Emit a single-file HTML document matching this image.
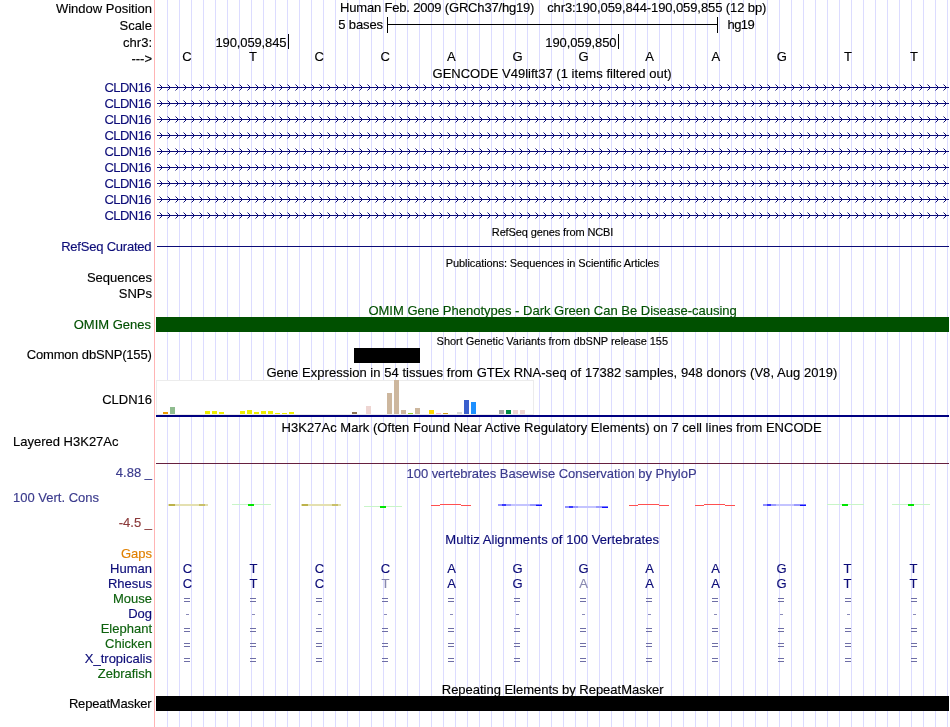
<!DOCTYPE html>
<html><head><meta charset="utf-8"><style>
html,body{margin:0;padding:0;background:#fff;width:950px;height:727px;overflow:hidden}
svg{display:block;font-family:"Liberation Sans", sans-serif;-webkit-font-smoothing:antialiased;will-change:transform}
text{stroke:currentColor;stroke-width:0.15px}
</style></head><body>
<svg width="950" height="727" viewBox="0 0 950 727" shape-rendering="crispEdges">
<rect x="167" y="0" width="1" height="727" fill="#dcdcff"/>
<rect x="179" y="0" width="1" height="727" fill="#dcdcff"/>
<rect x="191" y="0" width="1" height="727" fill="#dcdcff"/>
<rect x="203" y="0" width="1" height="727" fill="#dcdcff"/>
<rect x="215" y="0" width="1" height="727" fill="#dcdcff"/>
<rect x="227" y="0" width="1" height="727" fill="#dcdcff"/>
<rect x="239" y="0" width="1" height="727" fill="#dcdcff"/>
<rect x="251" y="0" width="1" height="727" fill="#dcdcff"/>
<rect x="263" y="0" width="1" height="727" fill="#dcdcff"/>
<rect x="275" y="0" width="1" height="727" fill="#dcdcff"/>
<rect x="287" y="0" width="1" height="727" fill="#dcdcff"/>
<rect x="299" y="0" width="1" height="727" fill="#dcdcff"/>
<rect x="311" y="0" width="1" height="727" fill="#dcdcff"/>
<rect x="323" y="0" width="1" height="727" fill="#dcdcff"/>
<rect x="335" y="0" width="1" height="727" fill="#dcdcff"/>
<rect x="347" y="0" width="1" height="727" fill="#dcdcff"/>
<rect x="359" y="0" width="1" height="727" fill="#dcdcff"/>
<rect x="371" y="0" width="1" height="727" fill="#dcdcff"/>
<rect x="383" y="0" width="1" height="727" fill="#dcdcff"/>
<rect x="395" y="0" width="1" height="727" fill="#dcdcff"/>
<rect x="407" y="0" width="1" height="727" fill="#dcdcff"/>
<rect x="419" y="0" width="1" height="727" fill="#dcdcff"/>
<rect x="431" y="0" width="1" height="727" fill="#dcdcff"/>
<rect x="443" y="0" width="1" height="727" fill="#dcdcff"/>
<rect x="455" y="0" width="1" height="727" fill="#dcdcff"/>
<rect x="467" y="0" width="1" height="727" fill="#dcdcff"/>
<rect x="479" y="0" width="1" height="727" fill="#dcdcff"/>
<rect x="491" y="0" width="1" height="727" fill="#dcdcff"/>
<rect x="503" y="0" width="1" height="727" fill="#dcdcff"/>
<rect x="515" y="0" width="1" height="727" fill="#dcdcff"/>
<rect x="527" y="0" width="1" height="727" fill="#dcdcff"/>
<rect x="539" y="0" width="1" height="727" fill="#dcdcff"/>
<rect x="551" y="0" width="1" height="727" fill="#dcdcff"/>
<rect x="563" y="0" width="1" height="727" fill="#dcdcff"/>
<rect x="575" y="0" width="1" height="727" fill="#dcdcff"/>
<rect x="587" y="0" width="1" height="727" fill="#dcdcff"/>
<rect x="599" y="0" width="1" height="727" fill="#dcdcff"/>
<rect x="611" y="0" width="1" height="727" fill="#dcdcff"/>
<rect x="623" y="0" width="1" height="727" fill="#dcdcff"/>
<rect x="635" y="0" width="1" height="727" fill="#dcdcff"/>
<rect x="647" y="0" width="1" height="727" fill="#dcdcff"/>
<rect x="659" y="0" width="1" height="727" fill="#dcdcff"/>
<rect x="671" y="0" width="1" height="727" fill="#dcdcff"/>
<rect x="683" y="0" width="1" height="727" fill="#dcdcff"/>
<rect x="695" y="0" width="1" height="727" fill="#dcdcff"/>
<rect x="707" y="0" width="1" height="727" fill="#dcdcff"/>
<rect x="719" y="0" width="1" height="727" fill="#dcdcff"/>
<rect x="731" y="0" width="1" height="727" fill="#dcdcff"/>
<rect x="743" y="0" width="1" height="727" fill="#dcdcff"/>
<rect x="755" y="0" width="1" height="727" fill="#dcdcff"/>
<rect x="767" y="0" width="1" height="727" fill="#dcdcff"/>
<rect x="779" y="0" width="1" height="727" fill="#dcdcff"/>
<rect x="791" y="0" width="1" height="727" fill="#dcdcff"/>
<rect x="803" y="0" width="1" height="727" fill="#dcdcff"/>
<rect x="815" y="0" width="1" height="727" fill="#dcdcff"/>
<rect x="827" y="0" width="1" height="727" fill="#dcdcff"/>
<rect x="839" y="0" width="1" height="727" fill="#dcdcff"/>
<rect x="851" y="0" width="1" height="727" fill="#dcdcff"/>
<rect x="863" y="0" width="1" height="727" fill="#dcdcff"/>
<rect x="875" y="0" width="1" height="727" fill="#dcdcff"/>
<rect x="887" y="0" width="1" height="727" fill="#dcdcff"/>
<rect x="899" y="0" width="1" height="727" fill="#dcdcff"/>
<rect x="911" y="0" width="1" height="727" fill="#dcdcff"/>
<rect x="923" y="0" width="1" height="727" fill="#dcdcff"/>
<rect x="935" y="0" width="1" height="727" fill="#dcdcff"/>
<rect x="947" y="0" width="1" height="727" fill="#dcdcff"/>
<rect x="154" y="0" width="1" height="727" fill="#ffb4b4"/>
<text x="152" y="12.5" font-size="13" fill="#000" color="#000" text-anchor="end">Window Position</text>
<text x="152" y="29.5" font-size="13" fill="#000" color="#000" text-anchor="end">Scale</text>
<text x="152" y="46.5" font-size="13" fill="#000" color="#000" text-anchor="end">chr3:</text>
<text x="152" y="62.5" font-size="13" fill="#000" color="#000" text-anchor="end">---&gt;</text>
<text x="340.0" y="12" font-size="13" fill="#000" color="#000" text-anchor="start" textLength="194.45" lengthAdjust="spacing">Human Feb. 2009 (GRCh37/hg19)</text>
<text x="547.2" y="12" font-size="13" fill="#000" color="#000" text-anchor="start" textLength="219.21" lengthAdjust="spacing">chr3:190,059,844-190,059,855 (12 bp)</text>
<text x="338.2" y="29" font-size="13" fill="#000" color="#000" text-anchor="start" textLength="44.83" lengthAdjust="spacing">5 bases</text>
<rect x="387" y="17" width="1" height="16" fill="#000"/>
<rect x="717" y="17" width="1" height="16" fill="#000"/>
<rect x="387" y="24" width="331" height="1" fill="#000"/>
<text x="727.6" y="29" font-size="13" fill="#000" color="#000" text-anchor="start" textLength="27.05" lengthAdjust="spacing">hg19</text>
<text x="215.5" y="46.5" font-size="13" fill="#000" color="#000" text-anchor="start" textLength="71.05" lengthAdjust="spacing">190,059,845</text>
<rect x="288" y="34" width="1" height="15" fill="#000"/>
<text x="545.3" y="46.5" font-size="13" fill="#000" color="#000" text-anchor="start" textLength="71.25" lengthAdjust="spacing">190,059,850</text>
<rect x="618" y="34" width="1" height="15" fill="#000"/>
<text x="187.0" y="61" font-size="13" fill="#000" color="#000" text-anchor="middle">C</text>
<text x="253.1" y="61" font-size="13" fill="#000" color="#000" text-anchor="middle">T</text>
<text x="319.2" y="61" font-size="13" fill="#000" color="#000" text-anchor="middle">C</text>
<text x="385.29999999999995" y="61" font-size="13" fill="#000" color="#000" text-anchor="middle">C</text>
<text x="451.4" y="61" font-size="13" fill="#000" color="#000" text-anchor="middle">A</text>
<text x="517.5" y="61" font-size="13" fill="#000" color="#000" text-anchor="middle">G</text>
<text x="583.5999999999999" y="61" font-size="13" fill="#000" color="#000" text-anchor="middle">G</text>
<text x="649.6999999999999" y="61" font-size="13" fill="#000" color="#000" text-anchor="middle">A</text>
<text x="715.8" y="61" font-size="13" fill="#000" color="#000" text-anchor="middle">A</text>
<text x="781.9" y="61" font-size="13" fill="#000" color="#000" text-anchor="middle">G</text>
<text x="848.0" y="61" font-size="13" fill="#000" color="#000" text-anchor="middle">T</text>
<text x="914.0999999999999" y="61" font-size="13" fill="#000" color="#000" text-anchor="middle">T</text>
<text x="432.5" y="78" font-size="13" fill="#000" color="#000" text-anchor="start" textLength="239.15" lengthAdjust="spacing">GENCODE V49lift37 (1 items filtered out)</text>
<text x="104.5" y="92" font-size="13" fill="#0c0c78" color="#0c0c78" text-anchor="start" textLength="47.08" lengthAdjust="spacing">CLDN16</text>
<rect x="157" y="87" width="792" height="1" fill="#0c0c78"/>
<path d="M161 86h1v3h-1zM160 85h1v1h-1zM160 89h1v1h-1zM169 86h1v3h-1zM168 85h1v1h-1zM168 89h1v1h-1zM177 86h1v3h-1zM176 85h1v1h-1zM176 89h1v1h-1zM185 86h1v3h-1zM184 85h1v1h-1zM184 89h1v1h-1zM193 86h1v3h-1zM192 85h1v1h-1zM192 89h1v1h-1zM201 86h1v3h-1zM200 85h1v1h-1zM200 89h1v1h-1zM209 86h1v3h-1zM208 85h1v1h-1zM208 89h1v1h-1zM217 86h1v3h-1zM216 85h1v1h-1zM216 89h1v1h-1zM225 86h1v3h-1zM224 85h1v1h-1zM224 89h1v1h-1zM233 86h1v3h-1zM232 85h1v1h-1zM232 89h1v1h-1zM241 86h1v3h-1zM240 85h1v1h-1zM240 89h1v1h-1zM249 86h1v3h-1zM248 85h1v1h-1zM248 89h1v1h-1zM257 86h1v3h-1zM256 85h1v1h-1zM256 89h1v1h-1zM265 86h1v3h-1zM264 85h1v1h-1zM264 89h1v1h-1zM273 86h1v3h-1zM272 85h1v1h-1zM272 89h1v1h-1zM281 86h1v3h-1zM280 85h1v1h-1zM280 89h1v1h-1zM289 86h1v3h-1zM288 85h1v1h-1zM288 89h1v1h-1zM297 86h1v3h-1zM296 85h1v1h-1zM296 89h1v1h-1zM305 86h1v3h-1zM304 85h1v1h-1zM304 89h1v1h-1zM313 86h1v3h-1zM312 85h1v1h-1zM312 89h1v1h-1zM321 86h1v3h-1zM320 85h1v1h-1zM320 89h1v1h-1zM329 86h1v3h-1zM328 85h1v1h-1zM328 89h1v1h-1zM337 86h1v3h-1zM336 85h1v1h-1zM336 89h1v1h-1zM345 86h1v3h-1zM344 85h1v1h-1zM344 89h1v1h-1zM353 86h1v3h-1zM352 85h1v1h-1zM352 89h1v1h-1zM361 86h1v3h-1zM360 85h1v1h-1zM360 89h1v1h-1zM369 86h1v3h-1zM368 85h1v1h-1zM368 89h1v1h-1zM377 86h1v3h-1zM376 85h1v1h-1zM376 89h1v1h-1zM385 86h1v3h-1zM384 85h1v1h-1zM384 89h1v1h-1zM393 86h1v3h-1zM392 85h1v1h-1zM392 89h1v1h-1zM401 86h1v3h-1zM400 85h1v1h-1zM400 89h1v1h-1zM409 86h1v3h-1zM408 85h1v1h-1zM408 89h1v1h-1zM417 86h1v3h-1zM416 85h1v1h-1zM416 89h1v1h-1zM425 86h1v3h-1zM424 85h1v1h-1zM424 89h1v1h-1zM433 86h1v3h-1zM432 85h1v1h-1zM432 89h1v1h-1zM441 86h1v3h-1zM440 85h1v1h-1zM440 89h1v1h-1zM449 86h1v3h-1zM448 85h1v1h-1zM448 89h1v1h-1zM457 86h1v3h-1zM456 85h1v1h-1zM456 89h1v1h-1zM465 86h1v3h-1zM464 85h1v1h-1zM464 89h1v1h-1zM473 86h1v3h-1zM472 85h1v1h-1zM472 89h1v1h-1zM481 86h1v3h-1zM480 85h1v1h-1zM480 89h1v1h-1zM489 86h1v3h-1zM488 85h1v1h-1zM488 89h1v1h-1zM497 86h1v3h-1zM496 85h1v1h-1zM496 89h1v1h-1zM505 86h1v3h-1zM504 85h1v1h-1zM504 89h1v1h-1zM513 86h1v3h-1zM512 85h1v1h-1zM512 89h1v1h-1zM521 86h1v3h-1zM520 85h1v1h-1zM520 89h1v1h-1zM529 86h1v3h-1zM528 85h1v1h-1zM528 89h1v1h-1zM537 86h1v3h-1zM536 85h1v1h-1zM536 89h1v1h-1zM545 86h1v3h-1zM544 85h1v1h-1zM544 89h1v1h-1zM553 86h1v3h-1zM552 85h1v1h-1zM552 89h1v1h-1zM561 86h1v3h-1zM560 85h1v1h-1zM560 89h1v1h-1zM569 86h1v3h-1zM568 85h1v1h-1zM568 89h1v1h-1zM577 86h1v3h-1zM576 85h1v1h-1zM576 89h1v1h-1zM585 86h1v3h-1zM584 85h1v1h-1zM584 89h1v1h-1zM593 86h1v3h-1zM592 85h1v1h-1zM592 89h1v1h-1zM601 86h1v3h-1zM600 85h1v1h-1zM600 89h1v1h-1zM609 86h1v3h-1zM608 85h1v1h-1zM608 89h1v1h-1zM617 86h1v3h-1zM616 85h1v1h-1zM616 89h1v1h-1zM625 86h1v3h-1zM624 85h1v1h-1zM624 89h1v1h-1zM633 86h1v3h-1zM632 85h1v1h-1zM632 89h1v1h-1zM641 86h1v3h-1zM640 85h1v1h-1zM640 89h1v1h-1zM649 86h1v3h-1zM648 85h1v1h-1zM648 89h1v1h-1zM657 86h1v3h-1zM656 85h1v1h-1zM656 89h1v1h-1zM665 86h1v3h-1zM664 85h1v1h-1zM664 89h1v1h-1zM673 86h1v3h-1zM672 85h1v1h-1zM672 89h1v1h-1zM681 86h1v3h-1zM680 85h1v1h-1zM680 89h1v1h-1zM689 86h1v3h-1zM688 85h1v1h-1zM688 89h1v1h-1zM697 86h1v3h-1zM696 85h1v1h-1zM696 89h1v1h-1zM705 86h1v3h-1zM704 85h1v1h-1zM704 89h1v1h-1zM713 86h1v3h-1zM712 85h1v1h-1zM712 89h1v1h-1zM721 86h1v3h-1zM720 85h1v1h-1zM720 89h1v1h-1zM729 86h1v3h-1zM728 85h1v1h-1zM728 89h1v1h-1zM737 86h1v3h-1zM736 85h1v1h-1zM736 89h1v1h-1zM745 86h1v3h-1zM744 85h1v1h-1zM744 89h1v1h-1zM753 86h1v3h-1zM752 85h1v1h-1zM752 89h1v1h-1zM761 86h1v3h-1zM760 85h1v1h-1zM760 89h1v1h-1zM769 86h1v3h-1zM768 85h1v1h-1zM768 89h1v1h-1zM777 86h1v3h-1zM776 85h1v1h-1zM776 89h1v1h-1zM785 86h1v3h-1zM784 85h1v1h-1zM784 89h1v1h-1zM793 86h1v3h-1zM792 85h1v1h-1zM792 89h1v1h-1zM801 86h1v3h-1zM800 85h1v1h-1zM800 89h1v1h-1zM809 86h1v3h-1zM808 85h1v1h-1zM808 89h1v1h-1zM817 86h1v3h-1zM816 85h1v1h-1zM816 89h1v1h-1zM825 86h1v3h-1zM824 85h1v1h-1zM824 89h1v1h-1zM833 86h1v3h-1zM832 85h1v1h-1zM832 89h1v1h-1zM841 86h1v3h-1zM840 85h1v1h-1zM840 89h1v1h-1zM849 86h1v3h-1zM848 85h1v1h-1zM848 89h1v1h-1zM857 86h1v3h-1zM856 85h1v1h-1zM856 89h1v1h-1zM865 86h1v3h-1zM864 85h1v1h-1zM864 89h1v1h-1zM873 86h1v3h-1zM872 85h1v1h-1zM872 89h1v1h-1zM881 86h1v3h-1zM880 85h1v1h-1zM880 89h1v1h-1zM889 86h1v3h-1zM888 85h1v1h-1zM888 89h1v1h-1zM897 86h1v3h-1zM896 85h1v1h-1zM896 89h1v1h-1zM905 86h1v3h-1zM904 85h1v1h-1zM904 89h1v1h-1zM913 86h1v3h-1zM912 85h1v1h-1zM912 89h1v1h-1zM921 86h1v3h-1zM920 85h1v1h-1zM920 89h1v1h-1zM929 86h1v3h-1zM928 85h1v1h-1zM928 89h1v1h-1zM937 86h1v3h-1zM936 85h1v1h-1zM936 89h1v1h-1zM945 86h1v3h-1zM944 85h1v1h-1zM944 89h1v1h-1z" fill="#0c0c78"/>
<path d="M159 84h1v1h-1zM159 90h1v1h-1zM167 84h1v1h-1zM167 90h1v1h-1zM175 84h1v1h-1zM175 90h1v1h-1zM183 84h1v1h-1zM183 90h1v1h-1zM191 84h1v1h-1zM191 90h1v1h-1zM199 84h1v1h-1zM199 90h1v1h-1zM207 84h1v1h-1zM207 90h1v1h-1zM215 84h1v1h-1zM215 90h1v1h-1zM223 84h1v1h-1zM223 90h1v1h-1zM231 84h1v1h-1zM231 90h1v1h-1zM239 84h1v1h-1zM239 90h1v1h-1zM247 84h1v1h-1zM247 90h1v1h-1zM255 84h1v1h-1zM255 90h1v1h-1zM263 84h1v1h-1zM263 90h1v1h-1zM271 84h1v1h-1zM271 90h1v1h-1zM279 84h1v1h-1zM279 90h1v1h-1zM287 84h1v1h-1zM287 90h1v1h-1zM295 84h1v1h-1zM295 90h1v1h-1zM303 84h1v1h-1zM303 90h1v1h-1zM311 84h1v1h-1zM311 90h1v1h-1zM319 84h1v1h-1zM319 90h1v1h-1zM327 84h1v1h-1zM327 90h1v1h-1zM335 84h1v1h-1zM335 90h1v1h-1zM343 84h1v1h-1zM343 90h1v1h-1zM351 84h1v1h-1zM351 90h1v1h-1zM359 84h1v1h-1zM359 90h1v1h-1zM367 84h1v1h-1zM367 90h1v1h-1zM375 84h1v1h-1zM375 90h1v1h-1zM383 84h1v1h-1zM383 90h1v1h-1zM391 84h1v1h-1zM391 90h1v1h-1zM399 84h1v1h-1zM399 90h1v1h-1zM407 84h1v1h-1zM407 90h1v1h-1zM415 84h1v1h-1zM415 90h1v1h-1zM423 84h1v1h-1zM423 90h1v1h-1zM431 84h1v1h-1zM431 90h1v1h-1zM439 84h1v1h-1zM439 90h1v1h-1zM447 84h1v1h-1zM447 90h1v1h-1zM455 84h1v1h-1zM455 90h1v1h-1zM463 84h1v1h-1zM463 90h1v1h-1zM471 84h1v1h-1zM471 90h1v1h-1zM479 84h1v1h-1zM479 90h1v1h-1zM487 84h1v1h-1zM487 90h1v1h-1zM495 84h1v1h-1zM495 90h1v1h-1zM503 84h1v1h-1zM503 90h1v1h-1zM511 84h1v1h-1zM511 90h1v1h-1zM519 84h1v1h-1zM519 90h1v1h-1zM527 84h1v1h-1zM527 90h1v1h-1zM535 84h1v1h-1zM535 90h1v1h-1zM543 84h1v1h-1zM543 90h1v1h-1zM551 84h1v1h-1zM551 90h1v1h-1zM559 84h1v1h-1zM559 90h1v1h-1zM567 84h1v1h-1zM567 90h1v1h-1zM575 84h1v1h-1zM575 90h1v1h-1zM583 84h1v1h-1zM583 90h1v1h-1zM591 84h1v1h-1zM591 90h1v1h-1zM599 84h1v1h-1zM599 90h1v1h-1zM607 84h1v1h-1zM607 90h1v1h-1zM615 84h1v1h-1zM615 90h1v1h-1zM623 84h1v1h-1zM623 90h1v1h-1zM631 84h1v1h-1zM631 90h1v1h-1zM639 84h1v1h-1zM639 90h1v1h-1zM647 84h1v1h-1zM647 90h1v1h-1zM655 84h1v1h-1zM655 90h1v1h-1zM663 84h1v1h-1zM663 90h1v1h-1zM671 84h1v1h-1zM671 90h1v1h-1zM679 84h1v1h-1zM679 90h1v1h-1zM687 84h1v1h-1zM687 90h1v1h-1zM695 84h1v1h-1zM695 90h1v1h-1zM703 84h1v1h-1zM703 90h1v1h-1zM711 84h1v1h-1zM711 90h1v1h-1zM719 84h1v1h-1zM719 90h1v1h-1zM727 84h1v1h-1zM727 90h1v1h-1zM735 84h1v1h-1zM735 90h1v1h-1zM743 84h1v1h-1zM743 90h1v1h-1zM751 84h1v1h-1zM751 90h1v1h-1zM759 84h1v1h-1zM759 90h1v1h-1zM767 84h1v1h-1zM767 90h1v1h-1zM775 84h1v1h-1zM775 90h1v1h-1zM783 84h1v1h-1zM783 90h1v1h-1zM791 84h1v1h-1zM791 90h1v1h-1zM799 84h1v1h-1zM799 90h1v1h-1zM807 84h1v1h-1zM807 90h1v1h-1zM815 84h1v1h-1zM815 90h1v1h-1zM823 84h1v1h-1zM823 90h1v1h-1zM831 84h1v1h-1zM831 90h1v1h-1zM839 84h1v1h-1zM839 90h1v1h-1zM847 84h1v1h-1zM847 90h1v1h-1zM855 84h1v1h-1zM855 90h1v1h-1zM863 84h1v1h-1zM863 90h1v1h-1zM871 84h1v1h-1zM871 90h1v1h-1zM879 84h1v1h-1zM879 90h1v1h-1zM887 84h1v1h-1zM887 90h1v1h-1zM895 84h1v1h-1zM895 90h1v1h-1zM903 84h1v1h-1zM903 90h1v1h-1zM911 84h1v1h-1zM911 90h1v1h-1zM919 84h1v1h-1zM919 90h1v1h-1zM927 84h1v1h-1zM927 90h1v1h-1zM935 84h1v1h-1zM935 90h1v1h-1zM943 84h1v1h-1zM943 90h1v1h-1z" fill="#0c0c78" fill-opacity="0.5"/>
<text x="104.5" y="108" font-size="13" fill="#0c0c78" color="#0c0c78" text-anchor="start" textLength="47.08" lengthAdjust="spacing">CLDN16</text>
<rect x="157" y="103" width="792" height="1" fill="#0c0c78"/>
<path d="M161 102h1v3h-1zM160 101h1v1h-1zM160 105h1v1h-1zM169 102h1v3h-1zM168 101h1v1h-1zM168 105h1v1h-1zM177 102h1v3h-1zM176 101h1v1h-1zM176 105h1v1h-1zM185 102h1v3h-1zM184 101h1v1h-1zM184 105h1v1h-1zM193 102h1v3h-1zM192 101h1v1h-1zM192 105h1v1h-1zM201 102h1v3h-1zM200 101h1v1h-1zM200 105h1v1h-1zM209 102h1v3h-1zM208 101h1v1h-1zM208 105h1v1h-1zM217 102h1v3h-1zM216 101h1v1h-1zM216 105h1v1h-1zM225 102h1v3h-1zM224 101h1v1h-1zM224 105h1v1h-1zM233 102h1v3h-1zM232 101h1v1h-1zM232 105h1v1h-1zM241 102h1v3h-1zM240 101h1v1h-1zM240 105h1v1h-1zM249 102h1v3h-1zM248 101h1v1h-1zM248 105h1v1h-1zM257 102h1v3h-1zM256 101h1v1h-1zM256 105h1v1h-1zM265 102h1v3h-1zM264 101h1v1h-1zM264 105h1v1h-1zM273 102h1v3h-1zM272 101h1v1h-1zM272 105h1v1h-1zM281 102h1v3h-1zM280 101h1v1h-1zM280 105h1v1h-1zM289 102h1v3h-1zM288 101h1v1h-1zM288 105h1v1h-1zM297 102h1v3h-1zM296 101h1v1h-1zM296 105h1v1h-1zM305 102h1v3h-1zM304 101h1v1h-1zM304 105h1v1h-1zM313 102h1v3h-1zM312 101h1v1h-1zM312 105h1v1h-1zM321 102h1v3h-1zM320 101h1v1h-1zM320 105h1v1h-1zM329 102h1v3h-1zM328 101h1v1h-1zM328 105h1v1h-1zM337 102h1v3h-1zM336 101h1v1h-1zM336 105h1v1h-1zM345 102h1v3h-1zM344 101h1v1h-1zM344 105h1v1h-1zM353 102h1v3h-1zM352 101h1v1h-1zM352 105h1v1h-1zM361 102h1v3h-1zM360 101h1v1h-1zM360 105h1v1h-1zM369 102h1v3h-1zM368 101h1v1h-1zM368 105h1v1h-1zM377 102h1v3h-1zM376 101h1v1h-1zM376 105h1v1h-1zM385 102h1v3h-1zM384 101h1v1h-1zM384 105h1v1h-1zM393 102h1v3h-1zM392 101h1v1h-1zM392 105h1v1h-1zM401 102h1v3h-1zM400 101h1v1h-1zM400 105h1v1h-1zM409 102h1v3h-1zM408 101h1v1h-1zM408 105h1v1h-1zM417 102h1v3h-1zM416 101h1v1h-1zM416 105h1v1h-1zM425 102h1v3h-1zM424 101h1v1h-1zM424 105h1v1h-1zM433 102h1v3h-1zM432 101h1v1h-1zM432 105h1v1h-1zM441 102h1v3h-1zM440 101h1v1h-1zM440 105h1v1h-1zM449 102h1v3h-1zM448 101h1v1h-1zM448 105h1v1h-1zM457 102h1v3h-1zM456 101h1v1h-1zM456 105h1v1h-1zM465 102h1v3h-1zM464 101h1v1h-1zM464 105h1v1h-1zM473 102h1v3h-1zM472 101h1v1h-1zM472 105h1v1h-1zM481 102h1v3h-1zM480 101h1v1h-1zM480 105h1v1h-1zM489 102h1v3h-1zM488 101h1v1h-1zM488 105h1v1h-1zM497 102h1v3h-1zM496 101h1v1h-1zM496 105h1v1h-1zM505 102h1v3h-1zM504 101h1v1h-1zM504 105h1v1h-1zM513 102h1v3h-1zM512 101h1v1h-1zM512 105h1v1h-1zM521 102h1v3h-1zM520 101h1v1h-1zM520 105h1v1h-1zM529 102h1v3h-1zM528 101h1v1h-1zM528 105h1v1h-1zM537 102h1v3h-1zM536 101h1v1h-1zM536 105h1v1h-1zM545 102h1v3h-1zM544 101h1v1h-1zM544 105h1v1h-1zM553 102h1v3h-1zM552 101h1v1h-1zM552 105h1v1h-1zM561 102h1v3h-1zM560 101h1v1h-1zM560 105h1v1h-1zM569 102h1v3h-1zM568 101h1v1h-1zM568 105h1v1h-1zM577 102h1v3h-1zM576 101h1v1h-1zM576 105h1v1h-1zM585 102h1v3h-1zM584 101h1v1h-1zM584 105h1v1h-1zM593 102h1v3h-1zM592 101h1v1h-1zM592 105h1v1h-1zM601 102h1v3h-1zM600 101h1v1h-1zM600 105h1v1h-1zM609 102h1v3h-1zM608 101h1v1h-1zM608 105h1v1h-1zM617 102h1v3h-1zM616 101h1v1h-1zM616 105h1v1h-1zM625 102h1v3h-1zM624 101h1v1h-1zM624 105h1v1h-1zM633 102h1v3h-1zM632 101h1v1h-1zM632 105h1v1h-1zM641 102h1v3h-1zM640 101h1v1h-1zM640 105h1v1h-1zM649 102h1v3h-1zM648 101h1v1h-1zM648 105h1v1h-1zM657 102h1v3h-1zM656 101h1v1h-1zM656 105h1v1h-1zM665 102h1v3h-1zM664 101h1v1h-1zM664 105h1v1h-1zM673 102h1v3h-1zM672 101h1v1h-1zM672 105h1v1h-1zM681 102h1v3h-1zM680 101h1v1h-1zM680 105h1v1h-1zM689 102h1v3h-1zM688 101h1v1h-1zM688 105h1v1h-1zM697 102h1v3h-1zM696 101h1v1h-1zM696 105h1v1h-1zM705 102h1v3h-1zM704 101h1v1h-1zM704 105h1v1h-1zM713 102h1v3h-1zM712 101h1v1h-1zM712 105h1v1h-1zM721 102h1v3h-1zM720 101h1v1h-1zM720 105h1v1h-1zM729 102h1v3h-1zM728 101h1v1h-1zM728 105h1v1h-1zM737 102h1v3h-1zM736 101h1v1h-1zM736 105h1v1h-1zM745 102h1v3h-1zM744 101h1v1h-1zM744 105h1v1h-1zM753 102h1v3h-1zM752 101h1v1h-1zM752 105h1v1h-1zM761 102h1v3h-1zM760 101h1v1h-1zM760 105h1v1h-1zM769 102h1v3h-1zM768 101h1v1h-1zM768 105h1v1h-1zM777 102h1v3h-1zM776 101h1v1h-1zM776 105h1v1h-1zM785 102h1v3h-1zM784 101h1v1h-1zM784 105h1v1h-1zM793 102h1v3h-1zM792 101h1v1h-1zM792 105h1v1h-1zM801 102h1v3h-1zM800 101h1v1h-1zM800 105h1v1h-1zM809 102h1v3h-1zM808 101h1v1h-1zM808 105h1v1h-1zM817 102h1v3h-1zM816 101h1v1h-1zM816 105h1v1h-1zM825 102h1v3h-1zM824 101h1v1h-1zM824 105h1v1h-1zM833 102h1v3h-1zM832 101h1v1h-1zM832 105h1v1h-1zM841 102h1v3h-1zM840 101h1v1h-1zM840 105h1v1h-1zM849 102h1v3h-1zM848 101h1v1h-1zM848 105h1v1h-1zM857 102h1v3h-1zM856 101h1v1h-1zM856 105h1v1h-1zM865 102h1v3h-1zM864 101h1v1h-1zM864 105h1v1h-1zM873 102h1v3h-1zM872 101h1v1h-1zM872 105h1v1h-1zM881 102h1v3h-1zM880 101h1v1h-1zM880 105h1v1h-1zM889 102h1v3h-1zM888 101h1v1h-1zM888 105h1v1h-1zM897 102h1v3h-1zM896 101h1v1h-1zM896 105h1v1h-1zM905 102h1v3h-1zM904 101h1v1h-1zM904 105h1v1h-1zM913 102h1v3h-1zM912 101h1v1h-1zM912 105h1v1h-1zM921 102h1v3h-1zM920 101h1v1h-1zM920 105h1v1h-1zM929 102h1v3h-1zM928 101h1v1h-1zM928 105h1v1h-1zM937 102h1v3h-1zM936 101h1v1h-1zM936 105h1v1h-1zM945 102h1v3h-1zM944 101h1v1h-1zM944 105h1v1h-1z" fill="#0c0c78"/>
<path d="M159 100h1v1h-1zM159 106h1v1h-1zM167 100h1v1h-1zM167 106h1v1h-1zM175 100h1v1h-1zM175 106h1v1h-1zM183 100h1v1h-1zM183 106h1v1h-1zM191 100h1v1h-1zM191 106h1v1h-1zM199 100h1v1h-1zM199 106h1v1h-1zM207 100h1v1h-1zM207 106h1v1h-1zM215 100h1v1h-1zM215 106h1v1h-1zM223 100h1v1h-1zM223 106h1v1h-1zM231 100h1v1h-1zM231 106h1v1h-1zM239 100h1v1h-1zM239 106h1v1h-1zM247 100h1v1h-1zM247 106h1v1h-1zM255 100h1v1h-1zM255 106h1v1h-1zM263 100h1v1h-1zM263 106h1v1h-1zM271 100h1v1h-1zM271 106h1v1h-1zM279 100h1v1h-1zM279 106h1v1h-1zM287 100h1v1h-1zM287 106h1v1h-1zM295 100h1v1h-1zM295 106h1v1h-1zM303 100h1v1h-1zM303 106h1v1h-1zM311 100h1v1h-1zM311 106h1v1h-1zM319 100h1v1h-1zM319 106h1v1h-1zM327 100h1v1h-1zM327 106h1v1h-1zM335 100h1v1h-1zM335 106h1v1h-1zM343 100h1v1h-1zM343 106h1v1h-1zM351 100h1v1h-1zM351 106h1v1h-1zM359 100h1v1h-1zM359 106h1v1h-1zM367 100h1v1h-1zM367 106h1v1h-1zM375 100h1v1h-1zM375 106h1v1h-1zM383 100h1v1h-1zM383 106h1v1h-1zM391 100h1v1h-1zM391 106h1v1h-1zM399 100h1v1h-1zM399 106h1v1h-1zM407 100h1v1h-1zM407 106h1v1h-1zM415 100h1v1h-1zM415 106h1v1h-1zM423 100h1v1h-1zM423 106h1v1h-1zM431 100h1v1h-1zM431 106h1v1h-1zM439 100h1v1h-1zM439 106h1v1h-1zM447 100h1v1h-1zM447 106h1v1h-1zM455 100h1v1h-1zM455 106h1v1h-1zM463 100h1v1h-1zM463 106h1v1h-1zM471 100h1v1h-1zM471 106h1v1h-1zM479 100h1v1h-1zM479 106h1v1h-1zM487 100h1v1h-1zM487 106h1v1h-1zM495 100h1v1h-1zM495 106h1v1h-1zM503 100h1v1h-1zM503 106h1v1h-1zM511 100h1v1h-1zM511 106h1v1h-1zM519 100h1v1h-1zM519 106h1v1h-1zM527 100h1v1h-1zM527 106h1v1h-1zM535 100h1v1h-1zM535 106h1v1h-1zM543 100h1v1h-1zM543 106h1v1h-1zM551 100h1v1h-1zM551 106h1v1h-1zM559 100h1v1h-1zM559 106h1v1h-1zM567 100h1v1h-1zM567 106h1v1h-1zM575 100h1v1h-1zM575 106h1v1h-1zM583 100h1v1h-1zM583 106h1v1h-1zM591 100h1v1h-1zM591 106h1v1h-1zM599 100h1v1h-1zM599 106h1v1h-1zM607 100h1v1h-1zM607 106h1v1h-1zM615 100h1v1h-1zM615 106h1v1h-1zM623 100h1v1h-1zM623 106h1v1h-1zM631 100h1v1h-1zM631 106h1v1h-1zM639 100h1v1h-1zM639 106h1v1h-1zM647 100h1v1h-1zM647 106h1v1h-1zM655 100h1v1h-1zM655 106h1v1h-1zM663 100h1v1h-1zM663 106h1v1h-1zM671 100h1v1h-1zM671 106h1v1h-1zM679 100h1v1h-1zM679 106h1v1h-1zM687 100h1v1h-1zM687 106h1v1h-1zM695 100h1v1h-1zM695 106h1v1h-1zM703 100h1v1h-1zM703 106h1v1h-1zM711 100h1v1h-1zM711 106h1v1h-1zM719 100h1v1h-1zM719 106h1v1h-1zM727 100h1v1h-1zM727 106h1v1h-1zM735 100h1v1h-1zM735 106h1v1h-1zM743 100h1v1h-1zM743 106h1v1h-1zM751 100h1v1h-1zM751 106h1v1h-1zM759 100h1v1h-1zM759 106h1v1h-1zM767 100h1v1h-1zM767 106h1v1h-1zM775 100h1v1h-1zM775 106h1v1h-1zM783 100h1v1h-1zM783 106h1v1h-1zM791 100h1v1h-1zM791 106h1v1h-1zM799 100h1v1h-1zM799 106h1v1h-1zM807 100h1v1h-1zM807 106h1v1h-1zM815 100h1v1h-1zM815 106h1v1h-1zM823 100h1v1h-1zM823 106h1v1h-1zM831 100h1v1h-1zM831 106h1v1h-1zM839 100h1v1h-1zM839 106h1v1h-1zM847 100h1v1h-1zM847 106h1v1h-1zM855 100h1v1h-1zM855 106h1v1h-1zM863 100h1v1h-1zM863 106h1v1h-1zM871 100h1v1h-1zM871 106h1v1h-1zM879 100h1v1h-1zM879 106h1v1h-1zM887 100h1v1h-1zM887 106h1v1h-1zM895 100h1v1h-1zM895 106h1v1h-1zM903 100h1v1h-1zM903 106h1v1h-1zM911 100h1v1h-1zM911 106h1v1h-1zM919 100h1v1h-1zM919 106h1v1h-1zM927 100h1v1h-1zM927 106h1v1h-1zM935 100h1v1h-1zM935 106h1v1h-1zM943 100h1v1h-1zM943 106h1v1h-1z" fill="#0c0c78" fill-opacity="0.5"/>
<text x="104.5" y="124" font-size="13" fill="#0c0c78" color="#0c0c78" text-anchor="start" textLength="47.08" lengthAdjust="spacing">CLDN16</text>
<rect x="157" y="119" width="792" height="1" fill="#0c0c78"/>
<path d="M161 118h1v3h-1zM160 117h1v1h-1zM160 121h1v1h-1zM169 118h1v3h-1zM168 117h1v1h-1zM168 121h1v1h-1zM177 118h1v3h-1zM176 117h1v1h-1zM176 121h1v1h-1zM185 118h1v3h-1zM184 117h1v1h-1zM184 121h1v1h-1zM193 118h1v3h-1zM192 117h1v1h-1zM192 121h1v1h-1zM201 118h1v3h-1zM200 117h1v1h-1zM200 121h1v1h-1zM209 118h1v3h-1zM208 117h1v1h-1zM208 121h1v1h-1zM217 118h1v3h-1zM216 117h1v1h-1zM216 121h1v1h-1zM225 118h1v3h-1zM224 117h1v1h-1zM224 121h1v1h-1zM233 118h1v3h-1zM232 117h1v1h-1zM232 121h1v1h-1zM241 118h1v3h-1zM240 117h1v1h-1zM240 121h1v1h-1zM249 118h1v3h-1zM248 117h1v1h-1zM248 121h1v1h-1zM257 118h1v3h-1zM256 117h1v1h-1zM256 121h1v1h-1zM265 118h1v3h-1zM264 117h1v1h-1zM264 121h1v1h-1zM273 118h1v3h-1zM272 117h1v1h-1zM272 121h1v1h-1zM281 118h1v3h-1zM280 117h1v1h-1zM280 121h1v1h-1zM289 118h1v3h-1zM288 117h1v1h-1zM288 121h1v1h-1zM297 118h1v3h-1zM296 117h1v1h-1zM296 121h1v1h-1zM305 118h1v3h-1zM304 117h1v1h-1zM304 121h1v1h-1zM313 118h1v3h-1zM312 117h1v1h-1zM312 121h1v1h-1zM321 118h1v3h-1zM320 117h1v1h-1zM320 121h1v1h-1zM329 118h1v3h-1zM328 117h1v1h-1zM328 121h1v1h-1zM337 118h1v3h-1zM336 117h1v1h-1zM336 121h1v1h-1zM345 118h1v3h-1zM344 117h1v1h-1zM344 121h1v1h-1zM353 118h1v3h-1zM352 117h1v1h-1zM352 121h1v1h-1zM361 118h1v3h-1zM360 117h1v1h-1zM360 121h1v1h-1zM369 118h1v3h-1zM368 117h1v1h-1zM368 121h1v1h-1zM377 118h1v3h-1zM376 117h1v1h-1zM376 121h1v1h-1zM385 118h1v3h-1zM384 117h1v1h-1zM384 121h1v1h-1zM393 118h1v3h-1zM392 117h1v1h-1zM392 121h1v1h-1zM401 118h1v3h-1zM400 117h1v1h-1zM400 121h1v1h-1zM409 118h1v3h-1zM408 117h1v1h-1zM408 121h1v1h-1zM417 118h1v3h-1zM416 117h1v1h-1zM416 121h1v1h-1zM425 118h1v3h-1zM424 117h1v1h-1zM424 121h1v1h-1zM433 118h1v3h-1zM432 117h1v1h-1zM432 121h1v1h-1zM441 118h1v3h-1zM440 117h1v1h-1zM440 121h1v1h-1zM449 118h1v3h-1zM448 117h1v1h-1zM448 121h1v1h-1zM457 118h1v3h-1zM456 117h1v1h-1zM456 121h1v1h-1zM465 118h1v3h-1zM464 117h1v1h-1zM464 121h1v1h-1zM473 118h1v3h-1zM472 117h1v1h-1zM472 121h1v1h-1zM481 118h1v3h-1zM480 117h1v1h-1zM480 121h1v1h-1zM489 118h1v3h-1zM488 117h1v1h-1zM488 121h1v1h-1zM497 118h1v3h-1zM496 117h1v1h-1zM496 121h1v1h-1zM505 118h1v3h-1zM504 117h1v1h-1zM504 121h1v1h-1zM513 118h1v3h-1zM512 117h1v1h-1zM512 121h1v1h-1zM521 118h1v3h-1zM520 117h1v1h-1zM520 121h1v1h-1zM529 118h1v3h-1zM528 117h1v1h-1zM528 121h1v1h-1zM537 118h1v3h-1zM536 117h1v1h-1zM536 121h1v1h-1zM545 118h1v3h-1zM544 117h1v1h-1zM544 121h1v1h-1zM553 118h1v3h-1zM552 117h1v1h-1zM552 121h1v1h-1zM561 118h1v3h-1zM560 117h1v1h-1zM560 121h1v1h-1zM569 118h1v3h-1zM568 117h1v1h-1zM568 121h1v1h-1zM577 118h1v3h-1zM576 117h1v1h-1zM576 121h1v1h-1zM585 118h1v3h-1zM584 117h1v1h-1zM584 121h1v1h-1zM593 118h1v3h-1zM592 117h1v1h-1zM592 121h1v1h-1zM601 118h1v3h-1zM600 117h1v1h-1zM600 121h1v1h-1zM609 118h1v3h-1zM608 117h1v1h-1zM608 121h1v1h-1zM617 118h1v3h-1zM616 117h1v1h-1zM616 121h1v1h-1zM625 118h1v3h-1zM624 117h1v1h-1zM624 121h1v1h-1zM633 118h1v3h-1zM632 117h1v1h-1zM632 121h1v1h-1zM641 118h1v3h-1zM640 117h1v1h-1zM640 121h1v1h-1zM649 118h1v3h-1zM648 117h1v1h-1zM648 121h1v1h-1zM657 118h1v3h-1zM656 117h1v1h-1zM656 121h1v1h-1zM665 118h1v3h-1zM664 117h1v1h-1zM664 121h1v1h-1zM673 118h1v3h-1zM672 117h1v1h-1zM672 121h1v1h-1zM681 118h1v3h-1zM680 117h1v1h-1zM680 121h1v1h-1zM689 118h1v3h-1zM688 117h1v1h-1zM688 121h1v1h-1zM697 118h1v3h-1zM696 117h1v1h-1zM696 121h1v1h-1zM705 118h1v3h-1zM704 117h1v1h-1zM704 121h1v1h-1zM713 118h1v3h-1zM712 117h1v1h-1zM712 121h1v1h-1zM721 118h1v3h-1zM720 117h1v1h-1zM720 121h1v1h-1zM729 118h1v3h-1zM728 117h1v1h-1zM728 121h1v1h-1zM737 118h1v3h-1zM736 117h1v1h-1zM736 121h1v1h-1zM745 118h1v3h-1zM744 117h1v1h-1zM744 121h1v1h-1zM753 118h1v3h-1zM752 117h1v1h-1zM752 121h1v1h-1zM761 118h1v3h-1zM760 117h1v1h-1zM760 121h1v1h-1zM769 118h1v3h-1zM768 117h1v1h-1zM768 121h1v1h-1zM777 118h1v3h-1zM776 117h1v1h-1zM776 121h1v1h-1zM785 118h1v3h-1zM784 117h1v1h-1zM784 121h1v1h-1zM793 118h1v3h-1zM792 117h1v1h-1zM792 121h1v1h-1zM801 118h1v3h-1zM800 117h1v1h-1zM800 121h1v1h-1zM809 118h1v3h-1zM808 117h1v1h-1zM808 121h1v1h-1zM817 118h1v3h-1zM816 117h1v1h-1zM816 121h1v1h-1zM825 118h1v3h-1zM824 117h1v1h-1zM824 121h1v1h-1zM833 118h1v3h-1zM832 117h1v1h-1zM832 121h1v1h-1zM841 118h1v3h-1zM840 117h1v1h-1zM840 121h1v1h-1zM849 118h1v3h-1zM848 117h1v1h-1zM848 121h1v1h-1zM857 118h1v3h-1zM856 117h1v1h-1zM856 121h1v1h-1zM865 118h1v3h-1zM864 117h1v1h-1zM864 121h1v1h-1zM873 118h1v3h-1zM872 117h1v1h-1zM872 121h1v1h-1zM881 118h1v3h-1zM880 117h1v1h-1zM880 121h1v1h-1zM889 118h1v3h-1zM888 117h1v1h-1zM888 121h1v1h-1zM897 118h1v3h-1zM896 117h1v1h-1zM896 121h1v1h-1zM905 118h1v3h-1zM904 117h1v1h-1zM904 121h1v1h-1zM913 118h1v3h-1zM912 117h1v1h-1zM912 121h1v1h-1zM921 118h1v3h-1zM920 117h1v1h-1zM920 121h1v1h-1zM929 118h1v3h-1zM928 117h1v1h-1zM928 121h1v1h-1zM937 118h1v3h-1zM936 117h1v1h-1zM936 121h1v1h-1zM945 118h1v3h-1zM944 117h1v1h-1zM944 121h1v1h-1z" fill="#0c0c78"/>
<path d="M159 116h1v1h-1zM159 122h1v1h-1zM167 116h1v1h-1zM167 122h1v1h-1zM175 116h1v1h-1zM175 122h1v1h-1zM183 116h1v1h-1zM183 122h1v1h-1zM191 116h1v1h-1zM191 122h1v1h-1zM199 116h1v1h-1zM199 122h1v1h-1zM207 116h1v1h-1zM207 122h1v1h-1zM215 116h1v1h-1zM215 122h1v1h-1zM223 116h1v1h-1zM223 122h1v1h-1zM231 116h1v1h-1zM231 122h1v1h-1zM239 116h1v1h-1zM239 122h1v1h-1zM247 116h1v1h-1zM247 122h1v1h-1zM255 116h1v1h-1zM255 122h1v1h-1zM263 116h1v1h-1zM263 122h1v1h-1zM271 116h1v1h-1zM271 122h1v1h-1zM279 116h1v1h-1zM279 122h1v1h-1zM287 116h1v1h-1zM287 122h1v1h-1zM295 116h1v1h-1zM295 122h1v1h-1zM303 116h1v1h-1zM303 122h1v1h-1zM311 116h1v1h-1zM311 122h1v1h-1zM319 116h1v1h-1zM319 122h1v1h-1zM327 116h1v1h-1zM327 122h1v1h-1zM335 116h1v1h-1zM335 122h1v1h-1zM343 116h1v1h-1zM343 122h1v1h-1zM351 116h1v1h-1zM351 122h1v1h-1zM359 116h1v1h-1zM359 122h1v1h-1zM367 116h1v1h-1zM367 122h1v1h-1zM375 116h1v1h-1zM375 122h1v1h-1zM383 116h1v1h-1zM383 122h1v1h-1zM391 116h1v1h-1zM391 122h1v1h-1zM399 116h1v1h-1zM399 122h1v1h-1zM407 116h1v1h-1zM407 122h1v1h-1zM415 116h1v1h-1zM415 122h1v1h-1zM423 116h1v1h-1zM423 122h1v1h-1zM431 116h1v1h-1zM431 122h1v1h-1zM439 116h1v1h-1zM439 122h1v1h-1zM447 116h1v1h-1zM447 122h1v1h-1zM455 116h1v1h-1zM455 122h1v1h-1zM463 116h1v1h-1zM463 122h1v1h-1zM471 116h1v1h-1zM471 122h1v1h-1zM479 116h1v1h-1zM479 122h1v1h-1zM487 116h1v1h-1zM487 122h1v1h-1zM495 116h1v1h-1zM495 122h1v1h-1zM503 116h1v1h-1zM503 122h1v1h-1zM511 116h1v1h-1zM511 122h1v1h-1zM519 116h1v1h-1zM519 122h1v1h-1zM527 116h1v1h-1zM527 122h1v1h-1zM535 116h1v1h-1zM535 122h1v1h-1zM543 116h1v1h-1zM543 122h1v1h-1zM551 116h1v1h-1zM551 122h1v1h-1zM559 116h1v1h-1zM559 122h1v1h-1zM567 116h1v1h-1zM567 122h1v1h-1zM575 116h1v1h-1zM575 122h1v1h-1zM583 116h1v1h-1zM583 122h1v1h-1zM591 116h1v1h-1zM591 122h1v1h-1zM599 116h1v1h-1zM599 122h1v1h-1zM607 116h1v1h-1zM607 122h1v1h-1zM615 116h1v1h-1zM615 122h1v1h-1zM623 116h1v1h-1zM623 122h1v1h-1zM631 116h1v1h-1zM631 122h1v1h-1zM639 116h1v1h-1zM639 122h1v1h-1zM647 116h1v1h-1zM647 122h1v1h-1zM655 116h1v1h-1zM655 122h1v1h-1zM663 116h1v1h-1zM663 122h1v1h-1zM671 116h1v1h-1zM671 122h1v1h-1zM679 116h1v1h-1zM679 122h1v1h-1zM687 116h1v1h-1zM687 122h1v1h-1zM695 116h1v1h-1zM695 122h1v1h-1zM703 116h1v1h-1zM703 122h1v1h-1zM711 116h1v1h-1zM711 122h1v1h-1zM719 116h1v1h-1zM719 122h1v1h-1zM727 116h1v1h-1zM727 122h1v1h-1zM735 116h1v1h-1zM735 122h1v1h-1zM743 116h1v1h-1zM743 122h1v1h-1zM751 116h1v1h-1zM751 122h1v1h-1zM759 116h1v1h-1zM759 122h1v1h-1zM767 116h1v1h-1zM767 122h1v1h-1zM775 116h1v1h-1zM775 122h1v1h-1zM783 116h1v1h-1zM783 122h1v1h-1zM791 116h1v1h-1zM791 122h1v1h-1zM799 116h1v1h-1zM799 122h1v1h-1zM807 116h1v1h-1zM807 122h1v1h-1zM815 116h1v1h-1zM815 122h1v1h-1zM823 116h1v1h-1zM823 122h1v1h-1zM831 116h1v1h-1zM831 122h1v1h-1zM839 116h1v1h-1zM839 122h1v1h-1zM847 116h1v1h-1zM847 122h1v1h-1zM855 116h1v1h-1zM855 122h1v1h-1zM863 116h1v1h-1zM863 122h1v1h-1zM871 116h1v1h-1zM871 122h1v1h-1zM879 116h1v1h-1zM879 122h1v1h-1zM887 116h1v1h-1zM887 122h1v1h-1zM895 116h1v1h-1zM895 122h1v1h-1zM903 116h1v1h-1zM903 122h1v1h-1zM911 116h1v1h-1zM911 122h1v1h-1zM919 116h1v1h-1zM919 122h1v1h-1zM927 116h1v1h-1zM927 122h1v1h-1zM935 116h1v1h-1zM935 122h1v1h-1zM943 116h1v1h-1zM943 122h1v1h-1z" fill="#0c0c78" fill-opacity="0.5"/>
<text x="104.5" y="140" font-size="13" fill="#0c0c78" color="#0c0c78" text-anchor="start" textLength="47.08" lengthAdjust="spacing">CLDN16</text>
<rect x="157" y="135" width="792" height="1" fill="#0c0c78"/>
<path d="M161 134h1v3h-1zM160 133h1v1h-1zM160 137h1v1h-1zM169 134h1v3h-1zM168 133h1v1h-1zM168 137h1v1h-1zM177 134h1v3h-1zM176 133h1v1h-1zM176 137h1v1h-1zM185 134h1v3h-1zM184 133h1v1h-1zM184 137h1v1h-1zM193 134h1v3h-1zM192 133h1v1h-1zM192 137h1v1h-1zM201 134h1v3h-1zM200 133h1v1h-1zM200 137h1v1h-1zM209 134h1v3h-1zM208 133h1v1h-1zM208 137h1v1h-1zM217 134h1v3h-1zM216 133h1v1h-1zM216 137h1v1h-1zM225 134h1v3h-1zM224 133h1v1h-1zM224 137h1v1h-1zM233 134h1v3h-1zM232 133h1v1h-1zM232 137h1v1h-1zM241 134h1v3h-1zM240 133h1v1h-1zM240 137h1v1h-1zM249 134h1v3h-1zM248 133h1v1h-1zM248 137h1v1h-1zM257 134h1v3h-1zM256 133h1v1h-1zM256 137h1v1h-1zM265 134h1v3h-1zM264 133h1v1h-1zM264 137h1v1h-1zM273 134h1v3h-1zM272 133h1v1h-1zM272 137h1v1h-1zM281 134h1v3h-1zM280 133h1v1h-1zM280 137h1v1h-1zM289 134h1v3h-1zM288 133h1v1h-1zM288 137h1v1h-1zM297 134h1v3h-1zM296 133h1v1h-1zM296 137h1v1h-1zM305 134h1v3h-1zM304 133h1v1h-1zM304 137h1v1h-1zM313 134h1v3h-1zM312 133h1v1h-1zM312 137h1v1h-1zM321 134h1v3h-1zM320 133h1v1h-1zM320 137h1v1h-1zM329 134h1v3h-1zM328 133h1v1h-1zM328 137h1v1h-1zM337 134h1v3h-1zM336 133h1v1h-1zM336 137h1v1h-1zM345 134h1v3h-1zM344 133h1v1h-1zM344 137h1v1h-1zM353 134h1v3h-1zM352 133h1v1h-1zM352 137h1v1h-1zM361 134h1v3h-1zM360 133h1v1h-1zM360 137h1v1h-1zM369 134h1v3h-1zM368 133h1v1h-1zM368 137h1v1h-1zM377 134h1v3h-1zM376 133h1v1h-1zM376 137h1v1h-1zM385 134h1v3h-1zM384 133h1v1h-1zM384 137h1v1h-1zM393 134h1v3h-1zM392 133h1v1h-1zM392 137h1v1h-1zM401 134h1v3h-1zM400 133h1v1h-1zM400 137h1v1h-1zM409 134h1v3h-1zM408 133h1v1h-1zM408 137h1v1h-1zM417 134h1v3h-1zM416 133h1v1h-1zM416 137h1v1h-1zM425 134h1v3h-1zM424 133h1v1h-1zM424 137h1v1h-1zM433 134h1v3h-1zM432 133h1v1h-1zM432 137h1v1h-1zM441 134h1v3h-1zM440 133h1v1h-1zM440 137h1v1h-1zM449 134h1v3h-1zM448 133h1v1h-1zM448 137h1v1h-1zM457 134h1v3h-1zM456 133h1v1h-1zM456 137h1v1h-1zM465 134h1v3h-1zM464 133h1v1h-1zM464 137h1v1h-1zM473 134h1v3h-1zM472 133h1v1h-1zM472 137h1v1h-1zM481 134h1v3h-1zM480 133h1v1h-1zM480 137h1v1h-1zM489 134h1v3h-1zM488 133h1v1h-1zM488 137h1v1h-1zM497 134h1v3h-1zM496 133h1v1h-1zM496 137h1v1h-1zM505 134h1v3h-1zM504 133h1v1h-1zM504 137h1v1h-1zM513 134h1v3h-1zM512 133h1v1h-1zM512 137h1v1h-1zM521 134h1v3h-1zM520 133h1v1h-1zM520 137h1v1h-1zM529 134h1v3h-1zM528 133h1v1h-1zM528 137h1v1h-1zM537 134h1v3h-1zM536 133h1v1h-1zM536 137h1v1h-1zM545 134h1v3h-1zM544 133h1v1h-1zM544 137h1v1h-1zM553 134h1v3h-1zM552 133h1v1h-1zM552 137h1v1h-1zM561 134h1v3h-1zM560 133h1v1h-1zM560 137h1v1h-1zM569 134h1v3h-1zM568 133h1v1h-1zM568 137h1v1h-1zM577 134h1v3h-1zM576 133h1v1h-1zM576 137h1v1h-1zM585 134h1v3h-1zM584 133h1v1h-1zM584 137h1v1h-1zM593 134h1v3h-1zM592 133h1v1h-1zM592 137h1v1h-1zM601 134h1v3h-1zM600 133h1v1h-1zM600 137h1v1h-1zM609 134h1v3h-1zM608 133h1v1h-1zM608 137h1v1h-1zM617 134h1v3h-1zM616 133h1v1h-1zM616 137h1v1h-1zM625 134h1v3h-1zM624 133h1v1h-1zM624 137h1v1h-1zM633 134h1v3h-1zM632 133h1v1h-1zM632 137h1v1h-1zM641 134h1v3h-1zM640 133h1v1h-1zM640 137h1v1h-1zM649 134h1v3h-1zM648 133h1v1h-1zM648 137h1v1h-1zM657 134h1v3h-1zM656 133h1v1h-1zM656 137h1v1h-1zM665 134h1v3h-1zM664 133h1v1h-1zM664 137h1v1h-1zM673 134h1v3h-1zM672 133h1v1h-1zM672 137h1v1h-1zM681 134h1v3h-1zM680 133h1v1h-1zM680 137h1v1h-1zM689 134h1v3h-1zM688 133h1v1h-1zM688 137h1v1h-1zM697 134h1v3h-1zM696 133h1v1h-1zM696 137h1v1h-1zM705 134h1v3h-1zM704 133h1v1h-1zM704 137h1v1h-1zM713 134h1v3h-1zM712 133h1v1h-1zM712 137h1v1h-1zM721 134h1v3h-1zM720 133h1v1h-1zM720 137h1v1h-1zM729 134h1v3h-1zM728 133h1v1h-1zM728 137h1v1h-1zM737 134h1v3h-1zM736 133h1v1h-1zM736 137h1v1h-1zM745 134h1v3h-1zM744 133h1v1h-1zM744 137h1v1h-1zM753 134h1v3h-1zM752 133h1v1h-1zM752 137h1v1h-1zM761 134h1v3h-1zM760 133h1v1h-1zM760 137h1v1h-1zM769 134h1v3h-1zM768 133h1v1h-1zM768 137h1v1h-1zM777 134h1v3h-1zM776 133h1v1h-1zM776 137h1v1h-1zM785 134h1v3h-1zM784 133h1v1h-1zM784 137h1v1h-1zM793 134h1v3h-1zM792 133h1v1h-1zM792 137h1v1h-1zM801 134h1v3h-1zM800 133h1v1h-1zM800 137h1v1h-1zM809 134h1v3h-1zM808 133h1v1h-1zM808 137h1v1h-1zM817 134h1v3h-1zM816 133h1v1h-1zM816 137h1v1h-1zM825 134h1v3h-1zM824 133h1v1h-1zM824 137h1v1h-1zM833 134h1v3h-1zM832 133h1v1h-1zM832 137h1v1h-1zM841 134h1v3h-1zM840 133h1v1h-1zM840 137h1v1h-1zM849 134h1v3h-1zM848 133h1v1h-1zM848 137h1v1h-1zM857 134h1v3h-1zM856 133h1v1h-1zM856 137h1v1h-1zM865 134h1v3h-1zM864 133h1v1h-1zM864 137h1v1h-1zM873 134h1v3h-1zM872 133h1v1h-1zM872 137h1v1h-1zM881 134h1v3h-1zM880 133h1v1h-1zM880 137h1v1h-1zM889 134h1v3h-1zM888 133h1v1h-1zM888 137h1v1h-1zM897 134h1v3h-1zM896 133h1v1h-1zM896 137h1v1h-1zM905 134h1v3h-1zM904 133h1v1h-1zM904 137h1v1h-1zM913 134h1v3h-1zM912 133h1v1h-1zM912 137h1v1h-1zM921 134h1v3h-1zM920 133h1v1h-1zM920 137h1v1h-1zM929 134h1v3h-1zM928 133h1v1h-1zM928 137h1v1h-1zM937 134h1v3h-1zM936 133h1v1h-1zM936 137h1v1h-1zM945 134h1v3h-1zM944 133h1v1h-1zM944 137h1v1h-1z" fill="#0c0c78"/>
<path d="M159 132h1v1h-1zM159 138h1v1h-1zM167 132h1v1h-1zM167 138h1v1h-1zM175 132h1v1h-1zM175 138h1v1h-1zM183 132h1v1h-1zM183 138h1v1h-1zM191 132h1v1h-1zM191 138h1v1h-1zM199 132h1v1h-1zM199 138h1v1h-1zM207 132h1v1h-1zM207 138h1v1h-1zM215 132h1v1h-1zM215 138h1v1h-1zM223 132h1v1h-1zM223 138h1v1h-1zM231 132h1v1h-1zM231 138h1v1h-1zM239 132h1v1h-1zM239 138h1v1h-1zM247 132h1v1h-1zM247 138h1v1h-1zM255 132h1v1h-1zM255 138h1v1h-1zM263 132h1v1h-1zM263 138h1v1h-1zM271 132h1v1h-1zM271 138h1v1h-1zM279 132h1v1h-1zM279 138h1v1h-1zM287 132h1v1h-1zM287 138h1v1h-1zM295 132h1v1h-1zM295 138h1v1h-1zM303 132h1v1h-1zM303 138h1v1h-1zM311 132h1v1h-1zM311 138h1v1h-1zM319 132h1v1h-1zM319 138h1v1h-1zM327 132h1v1h-1zM327 138h1v1h-1zM335 132h1v1h-1zM335 138h1v1h-1zM343 132h1v1h-1zM343 138h1v1h-1zM351 132h1v1h-1zM351 138h1v1h-1zM359 132h1v1h-1zM359 138h1v1h-1zM367 132h1v1h-1zM367 138h1v1h-1zM375 132h1v1h-1zM375 138h1v1h-1zM383 132h1v1h-1zM383 138h1v1h-1zM391 132h1v1h-1zM391 138h1v1h-1zM399 132h1v1h-1zM399 138h1v1h-1zM407 132h1v1h-1zM407 138h1v1h-1zM415 132h1v1h-1zM415 138h1v1h-1zM423 132h1v1h-1zM423 138h1v1h-1zM431 132h1v1h-1zM431 138h1v1h-1zM439 132h1v1h-1zM439 138h1v1h-1zM447 132h1v1h-1zM447 138h1v1h-1zM455 132h1v1h-1zM455 138h1v1h-1zM463 132h1v1h-1zM463 138h1v1h-1zM471 132h1v1h-1zM471 138h1v1h-1zM479 132h1v1h-1zM479 138h1v1h-1zM487 132h1v1h-1zM487 138h1v1h-1zM495 132h1v1h-1zM495 138h1v1h-1zM503 132h1v1h-1zM503 138h1v1h-1zM511 132h1v1h-1zM511 138h1v1h-1zM519 132h1v1h-1zM519 138h1v1h-1zM527 132h1v1h-1zM527 138h1v1h-1zM535 132h1v1h-1zM535 138h1v1h-1zM543 132h1v1h-1zM543 138h1v1h-1zM551 132h1v1h-1zM551 138h1v1h-1zM559 132h1v1h-1zM559 138h1v1h-1zM567 132h1v1h-1zM567 138h1v1h-1zM575 132h1v1h-1zM575 138h1v1h-1zM583 132h1v1h-1zM583 138h1v1h-1zM591 132h1v1h-1zM591 138h1v1h-1zM599 132h1v1h-1zM599 138h1v1h-1zM607 132h1v1h-1zM607 138h1v1h-1zM615 132h1v1h-1zM615 138h1v1h-1zM623 132h1v1h-1zM623 138h1v1h-1zM631 132h1v1h-1zM631 138h1v1h-1zM639 132h1v1h-1zM639 138h1v1h-1zM647 132h1v1h-1zM647 138h1v1h-1zM655 132h1v1h-1zM655 138h1v1h-1zM663 132h1v1h-1zM663 138h1v1h-1zM671 132h1v1h-1zM671 138h1v1h-1zM679 132h1v1h-1zM679 138h1v1h-1zM687 132h1v1h-1zM687 138h1v1h-1zM695 132h1v1h-1zM695 138h1v1h-1zM703 132h1v1h-1zM703 138h1v1h-1zM711 132h1v1h-1zM711 138h1v1h-1zM719 132h1v1h-1zM719 138h1v1h-1zM727 132h1v1h-1zM727 138h1v1h-1zM735 132h1v1h-1zM735 138h1v1h-1zM743 132h1v1h-1zM743 138h1v1h-1zM751 132h1v1h-1zM751 138h1v1h-1zM759 132h1v1h-1zM759 138h1v1h-1zM767 132h1v1h-1zM767 138h1v1h-1zM775 132h1v1h-1zM775 138h1v1h-1zM783 132h1v1h-1zM783 138h1v1h-1zM791 132h1v1h-1zM791 138h1v1h-1zM799 132h1v1h-1zM799 138h1v1h-1zM807 132h1v1h-1zM807 138h1v1h-1zM815 132h1v1h-1zM815 138h1v1h-1zM823 132h1v1h-1zM823 138h1v1h-1zM831 132h1v1h-1zM831 138h1v1h-1zM839 132h1v1h-1zM839 138h1v1h-1zM847 132h1v1h-1zM847 138h1v1h-1zM855 132h1v1h-1zM855 138h1v1h-1zM863 132h1v1h-1zM863 138h1v1h-1zM871 132h1v1h-1zM871 138h1v1h-1zM879 132h1v1h-1zM879 138h1v1h-1zM887 132h1v1h-1zM887 138h1v1h-1zM895 132h1v1h-1zM895 138h1v1h-1zM903 132h1v1h-1zM903 138h1v1h-1zM911 132h1v1h-1zM911 138h1v1h-1zM919 132h1v1h-1zM919 138h1v1h-1zM927 132h1v1h-1zM927 138h1v1h-1zM935 132h1v1h-1zM935 138h1v1h-1zM943 132h1v1h-1zM943 138h1v1h-1z" fill="#0c0c78" fill-opacity="0.5"/>
<text x="104.5" y="156" font-size="13" fill="#0c0c78" color="#0c0c78" text-anchor="start" textLength="47.08" lengthAdjust="spacing">CLDN16</text>
<rect x="157" y="151" width="792" height="1" fill="#0c0c78"/>
<path d="M161 150h1v3h-1zM160 149h1v1h-1zM160 153h1v1h-1zM169 150h1v3h-1zM168 149h1v1h-1zM168 153h1v1h-1zM177 150h1v3h-1zM176 149h1v1h-1zM176 153h1v1h-1zM185 150h1v3h-1zM184 149h1v1h-1zM184 153h1v1h-1zM193 150h1v3h-1zM192 149h1v1h-1zM192 153h1v1h-1zM201 150h1v3h-1zM200 149h1v1h-1zM200 153h1v1h-1zM209 150h1v3h-1zM208 149h1v1h-1zM208 153h1v1h-1zM217 150h1v3h-1zM216 149h1v1h-1zM216 153h1v1h-1zM225 150h1v3h-1zM224 149h1v1h-1zM224 153h1v1h-1zM233 150h1v3h-1zM232 149h1v1h-1zM232 153h1v1h-1zM241 150h1v3h-1zM240 149h1v1h-1zM240 153h1v1h-1zM249 150h1v3h-1zM248 149h1v1h-1zM248 153h1v1h-1zM257 150h1v3h-1zM256 149h1v1h-1zM256 153h1v1h-1zM265 150h1v3h-1zM264 149h1v1h-1zM264 153h1v1h-1zM273 150h1v3h-1zM272 149h1v1h-1zM272 153h1v1h-1zM281 150h1v3h-1zM280 149h1v1h-1zM280 153h1v1h-1zM289 150h1v3h-1zM288 149h1v1h-1zM288 153h1v1h-1zM297 150h1v3h-1zM296 149h1v1h-1zM296 153h1v1h-1zM305 150h1v3h-1zM304 149h1v1h-1zM304 153h1v1h-1zM313 150h1v3h-1zM312 149h1v1h-1zM312 153h1v1h-1zM321 150h1v3h-1zM320 149h1v1h-1zM320 153h1v1h-1zM329 150h1v3h-1zM328 149h1v1h-1zM328 153h1v1h-1zM337 150h1v3h-1zM336 149h1v1h-1zM336 153h1v1h-1zM345 150h1v3h-1zM344 149h1v1h-1zM344 153h1v1h-1zM353 150h1v3h-1zM352 149h1v1h-1zM352 153h1v1h-1zM361 150h1v3h-1zM360 149h1v1h-1zM360 153h1v1h-1zM369 150h1v3h-1zM368 149h1v1h-1zM368 153h1v1h-1zM377 150h1v3h-1zM376 149h1v1h-1zM376 153h1v1h-1zM385 150h1v3h-1zM384 149h1v1h-1zM384 153h1v1h-1zM393 150h1v3h-1zM392 149h1v1h-1zM392 153h1v1h-1zM401 150h1v3h-1zM400 149h1v1h-1zM400 153h1v1h-1zM409 150h1v3h-1zM408 149h1v1h-1zM408 153h1v1h-1zM417 150h1v3h-1zM416 149h1v1h-1zM416 153h1v1h-1zM425 150h1v3h-1zM424 149h1v1h-1zM424 153h1v1h-1zM433 150h1v3h-1zM432 149h1v1h-1zM432 153h1v1h-1zM441 150h1v3h-1zM440 149h1v1h-1zM440 153h1v1h-1zM449 150h1v3h-1zM448 149h1v1h-1zM448 153h1v1h-1zM457 150h1v3h-1zM456 149h1v1h-1zM456 153h1v1h-1zM465 150h1v3h-1zM464 149h1v1h-1zM464 153h1v1h-1zM473 150h1v3h-1zM472 149h1v1h-1zM472 153h1v1h-1zM481 150h1v3h-1zM480 149h1v1h-1zM480 153h1v1h-1zM489 150h1v3h-1zM488 149h1v1h-1zM488 153h1v1h-1zM497 150h1v3h-1zM496 149h1v1h-1zM496 153h1v1h-1zM505 150h1v3h-1zM504 149h1v1h-1zM504 153h1v1h-1zM513 150h1v3h-1zM512 149h1v1h-1zM512 153h1v1h-1zM521 150h1v3h-1zM520 149h1v1h-1zM520 153h1v1h-1zM529 150h1v3h-1zM528 149h1v1h-1zM528 153h1v1h-1zM537 150h1v3h-1zM536 149h1v1h-1zM536 153h1v1h-1zM545 150h1v3h-1zM544 149h1v1h-1zM544 153h1v1h-1zM553 150h1v3h-1zM552 149h1v1h-1zM552 153h1v1h-1zM561 150h1v3h-1zM560 149h1v1h-1zM560 153h1v1h-1zM569 150h1v3h-1zM568 149h1v1h-1zM568 153h1v1h-1zM577 150h1v3h-1zM576 149h1v1h-1zM576 153h1v1h-1zM585 150h1v3h-1zM584 149h1v1h-1zM584 153h1v1h-1zM593 150h1v3h-1zM592 149h1v1h-1zM592 153h1v1h-1zM601 150h1v3h-1zM600 149h1v1h-1zM600 153h1v1h-1zM609 150h1v3h-1zM608 149h1v1h-1zM608 153h1v1h-1zM617 150h1v3h-1zM616 149h1v1h-1zM616 153h1v1h-1zM625 150h1v3h-1zM624 149h1v1h-1zM624 153h1v1h-1zM633 150h1v3h-1zM632 149h1v1h-1zM632 153h1v1h-1zM641 150h1v3h-1zM640 149h1v1h-1zM640 153h1v1h-1zM649 150h1v3h-1zM648 149h1v1h-1zM648 153h1v1h-1zM657 150h1v3h-1zM656 149h1v1h-1zM656 153h1v1h-1zM665 150h1v3h-1zM664 149h1v1h-1zM664 153h1v1h-1zM673 150h1v3h-1zM672 149h1v1h-1zM672 153h1v1h-1zM681 150h1v3h-1zM680 149h1v1h-1zM680 153h1v1h-1zM689 150h1v3h-1zM688 149h1v1h-1zM688 153h1v1h-1zM697 150h1v3h-1zM696 149h1v1h-1zM696 153h1v1h-1zM705 150h1v3h-1zM704 149h1v1h-1zM704 153h1v1h-1zM713 150h1v3h-1zM712 149h1v1h-1zM712 153h1v1h-1zM721 150h1v3h-1zM720 149h1v1h-1zM720 153h1v1h-1zM729 150h1v3h-1zM728 149h1v1h-1zM728 153h1v1h-1zM737 150h1v3h-1zM736 149h1v1h-1zM736 153h1v1h-1zM745 150h1v3h-1zM744 149h1v1h-1zM744 153h1v1h-1zM753 150h1v3h-1zM752 149h1v1h-1zM752 153h1v1h-1zM761 150h1v3h-1zM760 149h1v1h-1zM760 153h1v1h-1zM769 150h1v3h-1zM768 149h1v1h-1zM768 153h1v1h-1zM777 150h1v3h-1zM776 149h1v1h-1zM776 153h1v1h-1zM785 150h1v3h-1zM784 149h1v1h-1zM784 153h1v1h-1zM793 150h1v3h-1zM792 149h1v1h-1zM792 153h1v1h-1zM801 150h1v3h-1zM800 149h1v1h-1zM800 153h1v1h-1zM809 150h1v3h-1zM808 149h1v1h-1zM808 153h1v1h-1zM817 150h1v3h-1zM816 149h1v1h-1zM816 153h1v1h-1zM825 150h1v3h-1zM824 149h1v1h-1zM824 153h1v1h-1zM833 150h1v3h-1zM832 149h1v1h-1zM832 153h1v1h-1zM841 150h1v3h-1zM840 149h1v1h-1zM840 153h1v1h-1zM849 150h1v3h-1zM848 149h1v1h-1zM848 153h1v1h-1zM857 150h1v3h-1zM856 149h1v1h-1zM856 153h1v1h-1zM865 150h1v3h-1zM864 149h1v1h-1zM864 153h1v1h-1zM873 150h1v3h-1zM872 149h1v1h-1zM872 153h1v1h-1zM881 150h1v3h-1zM880 149h1v1h-1zM880 153h1v1h-1zM889 150h1v3h-1zM888 149h1v1h-1zM888 153h1v1h-1zM897 150h1v3h-1zM896 149h1v1h-1zM896 153h1v1h-1zM905 150h1v3h-1zM904 149h1v1h-1zM904 153h1v1h-1zM913 150h1v3h-1zM912 149h1v1h-1zM912 153h1v1h-1zM921 150h1v3h-1zM920 149h1v1h-1zM920 153h1v1h-1zM929 150h1v3h-1zM928 149h1v1h-1zM928 153h1v1h-1zM937 150h1v3h-1zM936 149h1v1h-1zM936 153h1v1h-1zM945 150h1v3h-1zM944 149h1v1h-1zM944 153h1v1h-1z" fill="#0c0c78"/>
<path d="M159 148h1v1h-1zM159 154h1v1h-1zM167 148h1v1h-1zM167 154h1v1h-1zM175 148h1v1h-1zM175 154h1v1h-1zM183 148h1v1h-1zM183 154h1v1h-1zM191 148h1v1h-1zM191 154h1v1h-1zM199 148h1v1h-1zM199 154h1v1h-1zM207 148h1v1h-1zM207 154h1v1h-1zM215 148h1v1h-1zM215 154h1v1h-1zM223 148h1v1h-1zM223 154h1v1h-1zM231 148h1v1h-1zM231 154h1v1h-1zM239 148h1v1h-1zM239 154h1v1h-1zM247 148h1v1h-1zM247 154h1v1h-1zM255 148h1v1h-1zM255 154h1v1h-1zM263 148h1v1h-1zM263 154h1v1h-1zM271 148h1v1h-1zM271 154h1v1h-1zM279 148h1v1h-1zM279 154h1v1h-1zM287 148h1v1h-1zM287 154h1v1h-1zM295 148h1v1h-1zM295 154h1v1h-1zM303 148h1v1h-1zM303 154h1v1h-1zM311 148h1v1h-1zM311 154h1v1h-1zM319 148h1v1h-1zM319 154h1v1h-1zM327 148h1v1h-1zM327 154h1v1h-1zM335 148h1v1h-1zM335 154h1v1h-1zM343 148h1v1h-1zM343 154h1v1h-1zM351 148h1v1h-1zM351 154h1v1h-1zM359 148h1v1h-1zM359 154h1v1h-1zM367 148h1v1h-1zM367 154h1v1h-1zM375 148h1v1h-1zM375 154h1v1h-1zM383 148h1v1h-1zM383 154h1v1h-1zM391 148h1v1h-1zM391 154h1v1h-1zM399 148h1v1h-1zM399 154h1v1h-1zM407 148h1v1h-1zM407 154h1v1h-1zM415 148h1v1h-1zM415 154h1v1h-1zM423 148h1v1h-1zM423 154h1v1h-1zM431 148h1v1h-1zM431 154h1v1h-1zM439 148h1v1h-1zM439 154h1v1h-1zM447 148h1v1h-1zM447 154h1v1h-1zM455 148h1v1h-1zM455 154h1v1h-1zM463 148h1v1h-1zM463 154h1v1h-1zM471 148h1v1h-1zM471 154h1v1h-1zM479 148h1v1h-1zM479 154h1v1h-1zM487 148h1v1h-1zM487 154h1v1h-1zM495 148h1v1h-1zM495 154h1v1h-1zM503 148h1v1h-1zM503 154h1v1h-1zM511 148h1v1h-1zM511 154h1v1h-1zM519 148h1v1h-1zM519 154h1v1h-1zM527 148h1v1h-1zM527 154h1v1h-1zM535 148h1v1h-1zM535 154h1v1h-1zM543 148h1v1h-1zM543 154h1v1h-1zM551 148h1v1h-1zM551 154h1v1h-1zM559 148h1v1h-1zM559 154h1v1h-1zM567 148h1v1h-1zM567 154h1v1h-1zM575 148h1v1h-1zM575 154h1v1h-1zM583 148h1v1h-1zM583 154h1v1h-1zM591 148h1v1h-1zM591 154h1v1h-1zM599 148h1v1h-1zM599 154h1v1h-1zM607 148h1v1h-1zM607 154h1v1h-1zM615 148h1v1h-1zM615 154h1v1h-1zM623 148h1v1h-1zM623 154h1v1h-1zM631 148h1v1h-1zM631 154h1v1h-1zM639 148h1v1h-1zM639 154h1v1h-1zM647 148h1v1h-1zM647 154h1v1h-1zM655 148h1v1h-1zM655 154h1v1h-1zM663 148h1v1h-1zM663 154h1v1h-1zM671 148h1v1h-1zM671 154h1v1h-1zM679 148h1v1h-1zM679 154h1v1h-1zM687 148h1v1h-1zM687 154h1v1h-1zM695 148h1v1h-1zM695 154h1v1h-1zM703 148h1v1h-1zM703 154h1v1h-1zM711 148h1v1h-1zM711 154h1v1h-1zM719 148h1v1h-1zM719 154h1v1h-1zM727 148h1v1h-1zM727 154h1v1h-1zM735 148h1v1h-1zM735 154h1v1h-1zM743 148h1v1h-1zM743 154h1v1h-1zM751 148h1v1h-1zM751 154h1v1h-1zM759 148h1v1h-1zM759 154h1v1h-1zM767 148h1v1h-1zM767 154h1v1h-1zM775 148h1v1h-1zM775 154h1v1h-1zM783 148h1v1h-1zM783 154h1v1h-1zM791 148h1v1h-1zM791 154h1v1h-1zM799 148h1v1h-1zM799 154h1v1h-1zM807 148h1v1h-1zM807 154h1v1h-1zM815 148h1v1h-1zM815 154h1v1h-1zM823 148h1v1h-1zM823 154h1v1h-1zM831 148h1v1h-1zM831 154h1v1h-1zM839 148h1v1h-1zM839 154h1v1h-1zM847 148h1v1h-1zM847 154h1v1h-1zM855 148h1v1h-1zM855 154h1v1h-1zM863 148h1v1h-1zM863 154h1v1h-1zM871 148h1v1h-1zM871 154h1v1h-1zM879 148h1v1h-1zM879 154h1v1h-1zM887 148h1v1h-1zM887 154h1v1h-1zM895 148h1v1h-1zM895 154h1v1h-1zM903 148h1v1h-1zM903 154h1v1h-1zM911 148h1v1h-1zM911 154h1v1h-1zM919 148h1v1h-1zM919 154h1v1h-1zM927 148h1v1h-1zM927 154h1v1h-1zM935 148h1v1h-1zM935 154h1v1h-1zM943 148h1v1h-1zM943 154h1v1h-1z" fill="#0c0c78" fill-opacity="0.5"/>
<text x="104.5" y="172" font-size="13" fill="#0c0c78" color="#0c0c78" text-anchor="start" textLength="47.08" lengthAdjust="spacing">CLDN16</text>
<rect x="157" y="167" width="792" height="1" fill="#0c0c78"/>
<path d="M161 166h1v3h-1zM160 165h1v1h-1zM160 169h1v1h-1zM169 166h1v3h-1zM168 165h1v1h-1zM168 169h1v1h-1zM177 166h1v3h-1zM176 165h1v1h-1zM176 169h1v1h-1zM185 166h1v3h-1zM184 165h1v1h-1zM184 169h1v1h-1zM193 166h1v3h-1zM192 165h1v1h-1zM192 169h1v1h-1zM201 166h1v3h-1zM200 165h1v1h-1zM200 169h1v1h-1zM209 166h1v3h-1zM208 165h1v1h-1zM208 169h1v1h-1zM217 166h1v3h-1zM216 165h1v1h-1zM216 169h1v1h-1zM225 166h1v3h-1zM224 165h1v1h-1zM224 169h1v1h-1zM233 166h1v3h-1zM232 165h1v1h-1zM232 169h1v1h-1zM241 166h1v3h-1zM240 165h1v1h-1zM240 169h1v1h-1zM249 166h1v3h-1zM248 165h1v1h-1zM248 169h1v1h-1zM257 166h1v3h-1zM256 165h1v1h-1zM256 169h1v1h-1zM265 166h1v3h-1zM264 165h1v1h-1zM264 169h1v1h-1zM273 166h1v3h-1zM272 165h1v1h-1zM272 169h1v1h-1zM281 166h1v3h-1zM280 165h1v1h-1zM280 169h1v1h-1zM289 166h1v3h-1zM288 165h1v1h-1zM288 169h1v1h-1zM297 166h1v3h-1zM296 165h1v1h-1zM296 169h1v1h-1zM305 166h1v3h-1zM304 165h1v1h-1zM304 169h1v1h-1zM313 166h1v3h-1zM312 165h1v1h-1zM312 169h1v1h-1zM321 166h1v3h-1zM320 165h1v1h-1zM320 169h1v1h-1zM329 166h1v3h-1zM328 165h1v1h-1zM328 169h1v1h-1zM337 166h1v3h-1zM336 165h1v1h-1zM336 169h1v1h-1zM345 166h1v3h-1zM344 165h1v1h-1zM344 169h1v1h-1zM353 166h1v3h-1zM352 165h1v1h-1zM352 169h1v1h-1zM361 166h1v3h-1zM360 165h1v1h-1zM360 169h1v1h-1zM369 166h1v3h-1zM368 165h1v1h-1zM368 169h1v1h-1zM377 166h1v3h-1zM376 165h1v1h-1zM376 169h1v1h-1zM385 166h1v3h-1zM384 165h1v1h-1zM384 169h1v1h-1zM393 166h1v3h-1zM392 165h1v1h-1zM392 169h1v1h-1zM401 166h1v3h-1zM400 165h1v1h-1zM400 169h1v1h-1zM409 166h1v3h-1zM408 165h1v1h-1zM408 169h1v1h-1zM417 166h1v3h-1zM416 165h1v1h-1zM416 169h1v1h-1zM425 166h1v3h-1zM424 165h1v1h-1zM424 169h1v1h-1zM433 166h1v3h-1zM432 165h1v1h-1zM432 169h1v1h-1zM441 166h1v3h-1zM440 165h1v1h-1zM440 169h1v1h-1zM449 166h1v3h-1zM448 165h1v1h-1zM448 169h1v1h-1zM457 166h1v3h-1zM456 165h1v1h-1zM456 169h1v1h-1zM465 166h1v3h-1zM464 165h1v1h-1zM464 169h1v1h-1zM473 166h1v3h-1zM472 165h1v1h-1zM472 169h1v1h-1zM481 166h1v3h-1zM480 165h1v1h-1zM480 169h1v1h-1zM489 166h1v3h-1zM488 165h1v1h-1zM488 169h1v1h-1zM497 166h1v3h-1zM496 165h1v1h-1zM496 169h1v1h-1zM505 166h1v3h-1zM504 165h1v1h-1zM504 169h1v1h-1zM513 166h1v3h-1zM512 165h1v1h-1zM512 169h1v1h-1zM521 166h1v3h-1zM520 165h1v1h-1zM520 169h1v1h-1zM529 166h1v3h-1zM528 165h1v1h-1zM528 169h1v1h-1zM537 166h1v3h-1zM536 165h1v1h-1zM536 169h1v1h-1zM545 166h1v3h-1zM544 165h1v1h-1zM544 169h1v1h-1zM553 166h1v3h-1zM552 165h1v1h-1zM552 169h1v1h-1zM561 166h1v3h-1zM560 165h1v1h-1zM560 169h1v1h-1zM569 166h1v3h-1zM568 165h1v1h-1zM568 169h1v1h-1zM577 166h1v3h-1zM576 165h1v1h-1zM576 169h1v1h-1zM585 166h1v3h-1zM584 165h1v1h-1zM584 169h1v1h-1zM593 166h1v3h-1zM592 165h1v1h-1zM592 169h1v1h-1zM601 166h1v3h-1zM600 165h1v1h-1zM600 169h1v1h-1zM609 166h1v3h-1zM608 165h1v1h-1zM608 169h1v1h-1zM617 166h1v3h-1zM616 165h1v1h-1zM616 169h1v1h-1zM625 166h1v3h-1zM624 165h1v1h-1zM624 169h1v1h-1zM633 166h1v3h-1zM632 165h1v1h-1zM632 169h1v1h-1zM641 166h1v3h-1zM640 165h1v1h-1zM640 169h1v1h-1zM649 166h1v3h-1zM648 165h1v1h-1zM648 169h1v1h-1zM657 166h1v3h-1zM656 165h1v1h-1zM656 169h1v1h-1zM665 166h1v3h-1zM664 165h1v1h-1zM664 169h1v1h-1zM673 166h1v3h-1zM672 165h1v1h-1zM672 169h1v1h-1zM681 166h1v3h-1zM680 165h1v1h-1zM680 169h1v1h-1zM689 166h1v3h-1zM688 165h1v1h-1zM688 169h1v1h-1zM697 166h1v3h-1zM696 165h1v1h-1zM696 169h1v1h-1zM705 166h1v3h-1zM704 165h1v1h-1zM704 169h1v1h-1zM713 166h1v3h-1zM712 165h1v1h-1zM712 169h1v1h-1zM721 166h1v3h-1zM720 165h1v1h-1zM720 169h1v1h-1zM729 166h1v3h-1zM728 165h1v1h-1zM728 169h1v1h-1zM737 166h1v3h-1zM736 165h1v1h-1zM736 169h1v1h-1zM745 166h1v3h-1zM744 165h1v1h-1zM744 169h1v1h-1zM753 166h1v3h-1zM752 165h1v1h-1zM752 169h1v1h-1zM761 166h1v3h-1zM760 165h1v1h-1zM760 169h1v1h-1zM769 166h1v3h-1zM768 165h1v1h-1zM768 169h1v1h-1zM777 166h1v3h-1zM776 165h1v1h-1zM776 169h1v1h-1zM785 166h1v3h-1zM784 165h1v1h-1zM784 169h1v1h-1zM793 166h1v3h-1zM792 165h1v1h-1zM792 169h1v1h-1zM801 166h1v3h-1zM800 165h1v1h-1zM800 169h1v1h-1zM809 166h1v3h-1zM808 165h1v1h-1zM808 169h1v1h-1zM817 166h1v3h-1zM816 165h1v1h-1zM816 169h1v1h-1zM825 166h1v3h-1zM824 165h1v1h-1zM824 169h1v1h-1zM833 166h1v3h-1zM832 165h1v1h-1zM832 169h1v1h-1zM841 166h1v3h-1zM840 165h1v1h-1zM840 169h1v1h-1zM849 166h1v3h-1zM848 165h1v1h-1zM848 169h1v1h-1zM857 166h1v3h-1zM856 165h1v1h-1zM856 169h1v1h-1zM865 166h1v3h-1zM864 165h1v1h-1zM864 169h1v1h-1zM873 166h1v3h-1zM872 165h1v1h-1zM872 169h1v1h-1zM881 166h1v3h-1zM880 165h1v1h-1zM880 169h1v1h-1zM889 166h1v3h-1zM888 165h1v1h-1zM888 169h1v1h-1zM897 166h1v3h-1zM896 165h1v1h-1zM896 169h1v1h-1zM905 166h1v3h-1zM904 165h1v1h-1zM904 169h1v1h-1zM913 166h1v3h-1zM912 165h1v1h-1zM912 169h1v1h-1zM921 166h1v3h-1zM920 165h1v1h-1zM920 169h1v1h-1zM929 166h1v3h-1zM928 165h1v1h-1zM928 169h1v1h-1zM937 166h1v3h-1zM936 165h1v1h-1zM936 169h1v1h-1zM945 166h1v3h-1zM944 165h1v1h-1zM944 169h1v1h-1z" fill="#0c0c78"/>
<path d="M159 164h1v1h-1zM159 170h1v1h-1zM167 164h1v1h-1zM167 170h1v1h-1zM175 164h1v1h-1zM175 170h1v1h-1zM183 164h1v1h-1zM183 170h1v1h-1zM191 164h1v1h-1zM191 170h1v1h-1zM199 164h1v1h-1zM199 170h1v1h-1zM207 164h1v1h-1zM207 170h1v1h-1zM215 164h1v1h-1zM215 170h1v1h-1zM223 164h1v1h-1zM223 170h1v1h-1zM231 164h1v1h-1zM231 170h1v1h-1zM239 164h1v1h-1zM239 170h1v1h-1zM247 164h1v1h-1zM247 170h1v1h-1zM255 164h1v1h-1zM255 170h1v1h-1zM263 164h1v1h-1zM263 170h1v1h-1zM271 164h1v1h-1zM271 170h1v1h-1zM279 164h1v1h-1zM279 170h1v1h-1zM287 164h1v1h-1zM287 170h1v1h-1zM295 164h1v1h-1zM295 170h1v1h-1zM303 164h1v1h-1zM303 170h1v1h-1zM311 164h1v1h-1zM311 170h1v1h-1zM319 164h1v1h-1zM319 170h1v1h-1zM327 164h1v1h-1zM327 170h1v1h-1zM335 164h1v1h-1zM335 170h1v1h-1zM343 164h1v1h-1zM343 170h1v1h-1zM351 164h1v1h-1zM351 170h1v1h-1zM359 164h1v1h-1zM359 170h1v1h-1zM367 164h1v1h-1zM367 170h1v1h-1zM375 164h1v1h-1zM375 170h1v1h-1zM383 164h1v1h-1zM383 170h1v1h-1zM391 164h1v1h-1zM391 170h1v1h-1zM399 164h1v1h-1zM399 170h1v1h-1zM407 164h1v1h-1zM407 170h1v1h-1zM415 164h1v1h-1zM415 170h1v1h-1zM423 164h1v1h-1zM423 170h1v1h-1zM431 164h1v1h-1zM431 170h1v1h-1zM439 164h1v1h-1zM439 170h1v1h-1zM447 164h1v1h-1zM447 170h1v1h-1zM455 164h1v1h-1zM455 170h1v1h-1zM463 164h1v1h-1zM463 170h1v1h-1zM471 164h1v1h-1zM471 170h1v1h-1zM479 164h1v1h-1zM479 170h1v1h-1zM487 164h1v1h-1zM487 170h1v1h-1zM495 164h1v1h-1zM495 170h1v1h-1zM503 164h1v1h-1zM503 170h1v1h-1zM511 164h1v1h-1zM511 170h1v1h-1zM519 164h1v1h-1zM519 170h1v1h-1zM527 164h1v1h-1zM527 170h1v1h-1zM535 164h1v1h-1zM535 170h1v1h-1zM543 164h1v1h-1zM543 170h1v1h-1zM551 164h1v1h-1zM551 170h1v1h-1zM559 164h1v1h-1zM559 170h1v1h-1zM567 164h1v1h-1zM567 170h1v1h-1zM575 164h1v1h-1zM575 170h1v1h-1zM583 164h1v1h-1zM583 170h1v1h-1zM591 164h1v1h-1zM591 170h1v1h-1zM599 164h1v1h-1zM599 170h1v1h-1zM607 164h1v1h-1zM607 170h1v1h-1zM615 164h1v1h-1zM615 170h1v1h-1zM623 164h1v1h-1zM623 170h1v1h-1zM631 164h1v1h-1zM631 170h1v1h-1zM639 164h1v1h-1zM639 170h1v1h-1zM647 164h1v1h-1zM647 170h1v1h-1zM655 164h1v1h-1zM655 170h1v1h-1zM663 164h1v1h-1zM663 170h1v1h-1zM671 164h1v1h-1zM671 170h1v1h-1zM679 164h1v1h-1zM679 170h1v1h-1zM687 164h1v1h-1zM687 170h1v1h-1zM695 164h1v1h-1zM695 170h1v1h-1zM703 164h1v1h-1zM703 170h1v1h-1zM711 164h1v1h-1zM711 170h1v1h-1zM719 164h1v1h-1zM719 170h1v1h-1zM727 164h1v1h-1zM727 170h1v1h-1zM735 164h1v1h-1zM735 170h1v1h-1zM743 164h1v1h-1zM743 170h1v1h-1zM751 164h1v1h-1zM751 170h1v1h-1zM759 164h1v1h-1zM759 170h1v1h-1zM767 164h1v1h-1zM767 170h1v1h-1zM775 164h1v1h-1zM775 170h1v1h-1zM783 164h1v1h-1zM783 170h1v1h-1zM791 164h1v1h-1zM791 170h1v1h-1zM799 164h1v1h-1zM799 170h1v1h-1zM807 164h1v1h-1zM807 170h1v1h-1zM815 164h1v1h-1zM815 170h1v1h-1zM823 164h1v1h-1zM823 170h1v1h-1zM831 164h1v1h-1zM831 170h1v1h-1zM839 164h1v1h-1zM839 170h1v1h-1zM847 164h1v1h-1zM847 170h1v1h-1zM855 164h1v1h-1zM855 170h1v1h-1zM863 164h1v1h-1zM863 170h1v1h-1zM871 164h1v1h-1zM871 170h1v1h-1zM879 164h1v1h-1zM879 170h1v1h-1zM887 164h1v1h-1zM887 170h1v1h-1zM895 164h1v1h-1zM895 170h1v1h-1zM903 164h1v1h-1zM903 170h1v1h-1zM911 164h1v1h-1zM911 170h1v1h-1zM919 164h1v1h-1zM919 170h1v1h-1zM927 164h1v1h-1zM927 170h1v1h-1zM935 164h1v1h-1zM935 170h1v1h-1zM943 164h1v1h-1zM943 170h1v1h-1z" fill="#0c0c78" fill-opacity="0.5"/>
<text x="104.5" y="188" font-size="13" fill="#0c0c78" color="#0c0c78" text-anchor="start" textLength="47.08" lengthAdjust="spacing">CLDN16</text>
<rect x="157" y="183" width="792" height="1" fill="#0c0c78"/>
<path d="M161 182h1v3h-1zM160 181h1v1h-1zM160 185h1v1h-1zM169 182h1v3h-1zM168 181h1v1h-1zM168 185h1v1h-1zM177 182h1v3h-1zM176 181h1v1h-1zM176 185h1v1h-1zM185 182h1v3h-1zM184 181h1v1h-1zM184 185h1v1h-1zM193 182h1v3h-1zM192 181h1v1h-1zM192 185h1v1h-1zM201 182h1v3h-1zM200 181h1v1h-1zM200 185h1v1h-1zM209 182h1v3h-1zM208 181h1v1h-1zM208 185h1v1h-1zM217 182h1v3h-1zM216 181h1v1h-1zM216 185h1v1h-1zM225 182h1v3h-1zM224 181h1v1h-1zM224 185h1v1h-1zM233 182h1v3h-1zM232 181h1v1h-1zM232 185h1v1h-1zM241 182h1v3h-1zM240 181h1v1h-1zM240 185h1v1h-1zM249 182h1v3h-1zM248 181h1v1h-1zM248 185h1v1h-1zM257 182h1v3h-1zM256 181h1v1h-1zM256 185h1v1h-1zM265 182h1v3h-1zM264 181h1v1h-1zM264 185h1v1h-1zM273 182h1v3h-1zM272 181h1v1h-1zM272 185h1v1h-1zM281 182h1v3h-1zM280 181h1v1h-1zM280 185h1v1h-1zM289 182h1v3h-1zM288 181h1v1h-1zM288 185h1v1h-1zM297 182h1v3h-1zM296 181h1v1h-1zM296 185h1v1h-1zM305 182h1v3h-1zM304 181h1v1h-1zM304 185h1v1h-1zM313 182h1v3h-1zM312 181h1v1h-1zM312 185h1v1h-1zM321 182h1v3h-1zM320 181h1v1h-1zM320 185h1v1h-1zM329 182h1v3h-1zM328 181h1v1h-1zM328 185h1v1h-1zM337 182h1v3h-1zM336 181h1v1h-1zM336 185h1v1h-1zM345 182h1v3h-1zM344 181h1v1h-1zM344 185h1v1h-1zM353 182h1v3h-1zM352 181h1v1h-1zM352 185h1v1h-1zM361 182h1v3h-1zM360 181h1v1h-1zM360 185h1v1h-1zM369 182h1v3h-1zM368 181h1v1h-1zM368 185h1v1h-1zM377 182h1v3h-1zM376 181h1v1h-1zM376 185h1v1h-1zM385 182h1v3h-1zM384 181h1v1h-1zM384 185h1v1h-1zM393 182h1v3h-1zM392 181h1v1h-1zM392 185h1v1h-1zM401 182h1v3h-1zM400 181h1v1h-1zM400 185h1v1h-1zM409 182h1v3h-1zM408 181h1v1h-1zM408 185h1v1h-1zM417 182h1v3h-1zM416 181h1v1h-1zM416 185h1v1h-1zM425 182h1v3h-1zM424 181h1v1h-1zM424 185h1v1h-1zM433 182h1v3h-1zM432 181h1v1h-1zM432 185h1v1h-1zM441 182h1v3h-1zM440 181h1v1h-1zM440 185h1v1h-1zM449 182h1v3h-1zM448 181h1v1h-1zM448 185h1v1h-1zM457 182h1v3h-1zM456 181h1v1h-1zM456 185h1v1h-1zM465 182h1v3h-1zM464 181h1v1h-1zM464 185h1v1h-1zM473 182h1v3h-1zM472 181h1v1h-1zM472 185h1v1h-1zM481 182h1v3h-1zM480 181h1v1h-1zM480 185h1v1h-1zM489 182h1v3h-1zM488 181h1v1h-1zM488 185h1v1h-1zM497 182h1v3h-1zM496 181h1v1h-1zM496 185h1v1h-1zM505 182h1v3h-1zM504 181h1v1h-1zM504 185h1v1h-1zM513 182h1v3h-1zM512 181h1v1h-1zM512 185h1v1h-1zM521 182h1v3h-1zM520 181h1v1h-1zM520 185h1v1h-1zM529 182h1v3h-1zM528 181h1v1h-1zM528 185h1v1h-1zM537 182h1v3h-1zM536 181h1v1h-1zM536 185h1v1h-1zM545 182h1v3h-1zM544 181h1v1h-1zM544 185h1v1h-1zM553 182h1v3h-1zM552 181h1v1h-1zM552 185h1v1h-1zM561 182h1v3h-1zM560 181h1v1h-1zM560 185h1v1h-1zM569 182h1v3h-1zM568 181h1v1h-1zM568 185h1v1h-1zM577 182h1v3h-1zM576 181h1v1h-1zM576 185h1v1h-1zM585 182h1v3h-1zM584 181h1v1h-1zM584 185h1v1h-1zM593 182h1v3h-1zM592 181h1v1h-1zM592 185h1v1h-1zM601 182h1v3h-1zM600 181h1v1h-1zM600 185h1v1h-1zM609 182h1v3h-1zM608 181h1v1h-1zM608 185h1v1h-1zM617 182h1v3h-1zM616 181h1v1h-1zM616 185h1v1h-1zM625 182h1v3h-1zM624 181h1v1h-1zM624 185h1v1h-1zM633 182h1v3h-1zM632 181h1v1h-1zM632 185h1v1h-1zM641 182h1v3h-1zM640 181h1v1h-1zM640 185h1v1h-1zM649 182h1v3h-1zM648 181h1v1h-1zM648 185h1v1h-1zM657 182h1v3h-1zM656 181h1v1h-1zM656 185h1v1h-1zM665 182h1v3h-1zM664 181h1v1h-1zM664 185h1v1h-1zM673 182h1v3h-1zM672 181h1v1h-1zM672 185h1v1h-1zM681 182h1v3h-1zM680 181h1v1h-1zM680 185h1v1h-1zM689 182h1v3h-1zM688 181h1v1h-1zM688 185h1v1h-1zM697 182h1v3h-1zM696 181h1v1h-1zM696 185h1v1h-1zM705 182h1v3h-1zM704 181h1v1h-1zM704 185h1v1h-1zM713 182h1v3h-1zM712 181h1v1h-1zM712 185h1v1h-1zM721 182h1v3h-1zM720 181h1v1h-1zM720 185h1v1h-1zM729 182h1v3h-1zM728 181h1v1h-1zM728 185h1v1h-1zM737 182h1v3h-1zM736 181h1v1h-1zM736 185h1v1h-1zM745 182h1v3h-1zM744 181h1v1h-1zM744 185h1v1h-1zM753 182h1v3h-1zM752 181h1v1h-1zM752 185h1v1h-1zM761 182h1v3h-1zM760 181h1v1h-1zM760 185h1v1h-1zM769 182h1v3h-1zM768 181h1v1h-1zM768 185h1v1h-1zM777 182h1v3h-1zM776 181h1v1h-1zM776 185h1v1h-1zM785 182h1v3h-1zM784 181h1v1h-1zM784 185h1v1h-1zM793 182h1v3h-1zM792 181h1v1h-1zM792 185h1v1h-1zM801 182h1v3h-1zM800 181h1v1h-1zM800 185h1v1h-1zM809 182h1v3h-1zM808 181h1v1h-1zM808 185h1v1h-1zM817 182h1v3h-1zM816 181h1v1h-1zM816 185h1v1h-1zM825 182h1v3h-1zM824 181h1v1h-1zM824 185h1v1h-1zM833 182h1v3h-1zM832 181h1v1h-1zM832 185h1v1h-1zM841 182h1v3h-1zM840 181h1v1h-1zM840 185h1v1h-1zM849 182h1v3h-1zM848 181h1v1h-1zM848 185h1v1h-1zM857 182h1v3h-1zM856 181h1v1h-1zM856 185h1v1h-1zM865 182h1v3h-1zM864 181h1v1h-1zM864 185h1v1h-1zM873 182h1v3h-1zM872 181h1v1h-1zM872 185h1v1h-1zM881 182h1v3h-1zM880 181h1v1h-1zM880 185h1v1h-1zM889 182h1v3h-1zM888 181h1v1h-1zM888 185h1v1h-1zM897 182h1v3h-1zM896 181h1v1h-1zM896 185h1v1h-1zM905 182h1v3h-1zM904 181h1v1h-1zM904 185h1v1h-1zM913 182h1v3h-1zM912 181h1v1h-1zM912 185h1v1h-1zM921 182h1v3h-1zM920 181h1v1h-1zM920 185h1v1h-1zM929 182h1v3h-1zM928 181h1v1h-1zM928 185h1v1h-1zM937 182h1v3h-1zM936 181h1v1h-1zM936 185h1v1h-1zM945 182h1v3h-1zM944 181h1v1h-1zM944 185h1v1h-1z" fill="#0c0c78"/>
<path d="M159 180h1v1h-1zM159 186h1v1h-1zM167 180h1v1h-1zM167 186h1v1h-1zM175 180h1v1h-1zM175 186h1v1h-1zM183 180h1v1h-1zM183 186h1v1h-1zM191 180h1v1h-1zM191 186h1v1h-1zM199 180h1v1h-1zM199 186h1v1h-1zM207 180h1v1h-1zM207 186h1v1h-1zM215 180h1v1h-1zM215 186h1v1h-1zM223 180h1v1h-1zM223 186h1v1h-1zM231 180h1v1h-1zM231 186h1v1h-1zM239 180h1v1h-1zM239 186h1v1h-1zM247 180h1v1h-1zM247 186h1v1h-1zM255 180h1v1h-1zM255 186h1v1h-1zM263 180h1v1h-1zM263 186h1v1h-1zM271 180h1v1h-1zM271 186h1v1h-1zM279 180h1v1h-1zM279 186h1v1h-1zM287 180h1v1h-1zM287 186h1v1h-1zM295 180h1v1h-1zM295 186h1v1h-1zM303 180h1v1h-1zM303 186h1v1h-1zM311 180h1v1h-1zM311 186h1v1h-1zM319 180h1v1h-1zM319 186h1v1h-1zM327 180h1v1h-1zM327 186h1v1h-1zM335 180h1v1h-1zM335 186h1v1h-1zM343 180h1v1h-1zM343 186h1v1h-1zM351 180h1v1h-1zM351 186h1v1h-1zM359 180h1v1h-1zM359 186h1v1h-1zM367 180h1v1h-1zM367 186h1v1h-1zM375 180h1v1h-1zM375 186h1v1h-1zM383 180h1v1h-1zM383 186h1v1h-1zM391 180h1v1h-1zM391 186h1v1h-1zM399 180h1v1h-1zM399 186h1v1h-1zM407 180h1v1h-1zM407 186h1v1h-1zM415 180h1v1h-1zM415 186h1v1h-1zM423 180h1v1h-1zM423 186h1v1h-1zM431 180h1v1h-1zM431 186h1v1h-1zM439 180h1v1h-1zM439 186h1v1h-1zM447 180h1v1h-1zM447 186h1v1h-1zM455 180h1v1h-1zM455 186h1v1h-1zM463 180h1v1h-1zM463 186h1v1h-1zM471 180h1v1h-1zM471 186h1v1h-1zM479 180h1v1h-1zM479 186h1v1h-1zM487 180h1v1h-1zM487 186h1v1h-1zM495 180h1v1h-1zM495 186h1v1h-1zM503 180h1v1h-1zM503 186h1v1h-1zM511 180h1v1h-1zM511 186h1v1h-1zM519 180h1v1h-1zM519 186h1v1h-1zM527 180h1v1h-1zM527 186h1v1h-1zM535 180h1v1h-1zM535 186h1v1h-1zM543 180h1v1h-1zM543 186h1v1h-1zM551 180h1v1h-1zM551 186h1v1h-1zM559 180h1v1h-1zM559 186h1v1h-1zM567 180h1v1h-1zM567 186h1v1h-1zM575 180h1v1h-1zM575 186h1v1h-1zM583 180h1v1h-1zM583 186h1v1h-1zM591 180h1v1h-1zM591 186h1v1h-1zM599 180h1v1h-1zM599 186h1v1h-1zM607 180h1v1h-1zM607 186h1v1h-1zM615 180h1v1h-1zM615 186h1v1h-1zM623 180h1v1h-1zM623 186h1v1h-1zM631 180h1v1h-1zM631 186h1v1h-1zM639 180h1v1h-1zM639 186h1v1h-1zM647 180h1v1h-1zM647 186h1v1h-1zM655 180h1v1h-1zM655 186h1v1h-1zM663 180h1v1h-1zM663 186h1v1h-1zM671 180h1v1h-1zM671 186h1v1h-1zM679 180h1v1h-1zM679 186h1v1h-1zM687 180h1v1h-1zM687 186h1v1h-1zM695 180h1v1h-1zM695 186h1v1h-1zM703 180h1v1h-1zM703 186h1v1h-1zM711 180h1v1h-1zM711 186h1v1h-1zM719 180h1v1h-1zM719 186h1v1h-1zM727 180h1v1h-1zM727 186h1v1h-1zM735 180h1v1h-1zM735 186h1v1h-1zM743 180h1v1h-1zM743 186h1v1h-1zM751 180h1v1h-1zM751 186h1v1h-1zM759 180h1v1h-1zM759 186h1v1h-1zM767 180h1v1h-1zM767 186h1v1h-1zM775 180h1v1h-1zM775 186h1v1h-1zM783 180h1v1h-1zM783 186h1v1h-1zM791 180h1v1h-1zM791 186h1v1h-1zM799 180h1v1h-1zM799 186h1v1h-1zM807 180h1v1h-1zM807 186h1v1h-1zM815 180h1v1h-1zM815 186h1v1h-1zM823 180h1v1h-1zM823 186h1v1h-1zM831 180h1v1h-1zM831 186h1v1h-1zM839 180h1v1h-1zM839 186h1v1h-1zM847 180h1v1h-1zM847 186h1v1h-1zM855 180h1v1h-1zM855 186h1v1h-1zM863 180h1v1h-1zM863 186h1v1h-1zM871 180h1v1h-1zM871 186h1v1h-1zM879 180h1v1h-1zM879 186h1v1h-1zM887 180h1v1h-1zM887 186h1v1h-1zM895 180h1v1h-1zM895 186h1v1h-1zM903 180h1v1h-1zM903 186h1v1h-1zM911 180h1v1h-1zM911 186h1v1h-1zM919 180h1v1h-1zM919 186h1v1h-1zM927 180h1v1h-1zM927 186h1v1h-1zM935 180h1v1h-1zM935 186h1v1h-1zM943 180h1v1h-1zM943 186h1v1h-1z" fill="#0c0c78" fill-opacity="0.5"/>
<text x="104.5" y="204" font-size="13" fill="#0c0c78" color="#0c0c78" text-anchor="start" textLength="47.08" lengthAdjust="spacing">CLDN16</text>
<rect x="157" y="199" width="792" height="1" fill="#0c0c78"/>
<path d="M161 198h1v3h-1zM160 197h1v1h-1zM160 201h1v1h-1zM169 198h1v3h-1zM168 197h1v1h-1zM168 201h1v1h-1zM177 198h1v3h-1zM176 197h1v1h-1zM176 201h1v1h-1zM185 198h1v3h-1zM184 197h1v1h-1zM184 201h1v1h-1zM193 198h1v3h-1zM192 197h1v1h-1zM192 201h1v1h-1zM201 198h1v3h-1zM200 197h1v1h-1zM200 201h1v1h-1zM209 198h1v3h-1zM208 197h1v1h-1zM208 201h1v1h-1zM217 198h1v3h-1zM216 197h1v1h-1zM216 201h1v1h-1zM225 198h1v3h-1zM224 197h1v1h-1zM224 201h1v1h-1zM233 198h1v3h-1zM232 197h1v1h-1zM232 201h1v1h-1zM241 198h1v3h-1zM240 197h1v1h-1zM240 201h1v1h-1zM249 198h1v3h-1zM248 197h1v1h-1zM248 201h1v1h-1zM257 198h1v3h-1zM256 197h1v1h-1zM256 201h1v1h-1zM265 198h1v3h-1zM264 197h1v1h-1zM264 201h1v1h-1zM273 198h1v3h-1zM272 197h1v1h-1zM272 201h1v1h-1zM281 198h1v3h-1zM280 197h1v1h-1zM280 201h1v1h-1zM289 198h1v3h-1zM288 197h1v1h-1zM288 201h1v1h-1zM297 198h1v3h-1zM296 197h1v1h-1zM296 201h1v1h-1zM305 198h1v3h-1zM304 197h1v1h-1zM304 201h1v1h-1zM313 198h1v3h-1zM312 197h1v1h-1zM312 201h1v1h-1zM321 198h1v3h-1zM320 197h1v1h-1zM320 201h1v1h-1zM329 198h1v3h-1zM328 197h1v1h-1zM328 201h1v1h-1zM337 198h1v3h-1zM336 197h1v1h-1zM336 201h1v1h-1zM345 198h1v3h-1zM344 197h1v1h-1zM344 201h1v1h-1zM353 198h1v3h-1zM352 197h1v1h-1zM352 201h1v1h-1zM361 198h1v3h-1zM360 197h1v1h-1zM360 201h1v1h-1zM369 198h1v3h-1zM368 197h1v1h-1zM368 201h1v1h-1zM377 198h1v3h-1zM376 197h1v1h-1zM376 201h1v1h-1zM385 198h1v3h-1zM384 197h1v1h-1zM384 201h1v1h-1zM393 198h1v3h-1zM392 197h1v1h-1zM392 201h1v1h-1zM401 198h1v3h-1zM400 197h1v1h-1zM400 201h1v1h-1zM409 198h1v3h-1zM408 197h1v1h-1zM408 201h1v1h-1zM417 198h1v3h-1zM416 197h1v1h-1zM416 201h1v1h-1zM425 198h1v3h-1zM424 197h1v1h-1zM424 201h1v1h-1zM433 198h1v3h-1zM432 197h1v1h-1zM432 201h1v1h-1zM441 198h1v3h-1zM440 197h1v1h-1zM440 201h1v1h-1zM449 198h1v3h-1zM448 197h1v1h-1zM448 201h1v1h-1zM457 198h1v3h-1zM456 197h1v1h-1zM456 201h1v1h-1zM465 198h1v3h-1zM464 197h1v1h-1zM464 201h1v1h-1zM473 198h1v3h-1zM472 197h1v1h-1zM472 201h1v1h-1zM481 198h1v3h-1zM480 197h1v1h-1zM480 201h1v1h-1zM489 198h1v3h-1zM488 197h1v1h-1zM488 201h1v1h-1zM497 198h1v3h-1zM496 197h1v1h-1zM496 201h1v1h-1zM505 198h1v3h-1zM504 197h1v1h-1zM504 201h1v1h-1zM513 198h1v3h-1zM512 197h1v1h-1zM512 201h1v1h-1zM521 198h1v3h-1zM520 197h1v1h-1zM520 201h1v1h-1zM529 198h1v3h-1zM528 197h1v1h-1zM528 201h1v1h-1zM537 198h1v3h-1zM536 197h1v1h-1zM536 201h1v1h-1zM545 198h1v3h-1zM544 197h1v1h-1zM544 201h1v1h-1zM553 198h1v3h-1zM552 197h1v1h-1zM552 201h1v1h-1zM561 198h1v3h-1zM560 197h1v1h-1zM560 201h1v1h-1zM569 198h1v3h-1zM568 197h1v1h-1zM568 201h1v1h-1zM577 198h1v3h-1zM576 197h1v1h-1zM576 201h1v1h-1zM585 198h1v3h-1zM584 197h1v1h-1zM584 201h1v1h-1zM593 198h1v3h-1zM592 197h1v1h-1zM592 201h1v1h-1zM601 198h1v3h-1zM600 197h1v1h-1zM600 201h1v1h-1zM609 198h1v3h-1zM608 197h1v1h-1zM608 201h1v1h-1zM617 198h1v3h-1zM616 197h1v1h-1zM616 201h1v1h-1zM625 198h1v3h-1zM624 197h1v1h-1zM624 201h1v1h-1zM633 198h1v3h-1zM632 197h1v1h-1zM632 201h1v1h-1zM641 198h1v3h-1zM640 197h1v1h-1zM640 201h1v1h-1zM649 198h1v3h-1zM648 197h1v1h-1zM648 201h1v1h-1zM657 198h1v3h-1zM656 197h1v1h-1zM656 201h1v1h-1zM665 198h1v3h-1zM664 197h1v1h-1zM664 201h1v1h-1zM673 198h1v3h-1zM672 197h1v1h-1zM672 201h1v1h-1zM681 198h1v3h-1zM680 197h1v1h-1zM680 201h1v1h-1zM689 198h1v3h-1zM688 197h1v1h-1zM688 201h1v1h-1zM697 198h1v3h-1zM696 197h1v1h-1zM696 201h1v1h-1zM705 198h1v3h-1zM704 197h1v1h-1zM704 201h1v1h-1zM713 198h1v3h-1zM712 197h1v1h-1zM712 201h1v1h-1zM721 198h1v3h-1zM720 197h1v1h-1zM720 201h1v1h-1zM729 198h1v3h-1zM728 197h1v1h-1zM728 201h1v1h-1zM737 198h1v3h-1zM736 197h1v1h-1zM736 201h1v1h-1zM745 198h1v3h-1zM744 197h1v1h-1zM744 201h1v1h-1zM753 198h1v3h-1zM752 197h1v1h-1zM752 201h1v1h-1zM761 198h1v3h-1zM760 197h1v1h-1zM760 201h1v1h-1zM769 198h1v3h-1zM768 197h1v1h-1zM768 201h1v1h-1zM777 198h1v3h-1zM776 197h1v1h-1zM776 201h1v1h-1zM785 198h1v3h-1zM784 197h1v1h-1zM784 201h1v1h-1zM793 198h1v3h-1zM792 197h1v1h-1zM792 201h1v1h-1zM801 198h1v3h-1zM800 197h1v1h-1zM800 201h1v1h-1zM809 198h1v3h-1zM808 197h1v1h-1zM808 201h1v1h-1zM817 198h1v3h-1zM816 197h1v1h-1zM816 201h1v1h-1zM825 198h1v3h-1zM824 197h1v1h-1zM824 201h1v1h-1zM833 198h1v3h-1zM832 197h1v1h-1zM832 201h1v1h-1zM841 198h1v3h-1zM840 197h1v1h-1zM840 201h1v1h-1zM849 198h1v3h-1zM848 197h1v1h-1zM848 201h1v1h-1zM857 198h1v3h-1zM856 197h1v1h-1zM856 201h1v1h-1zM865 198h1v3h-1zM864 197h1v1h-1zM864 201h1v1h-1zM873 198h1v3h-1zM872 197h1v1h-1zM872 201h1v1h-1zM881 198h1v3h-1zM880 197h1v1h-1zM880 201h1v1h-1zM889 198h1v3h-1zM888 197h1v1h-1zM888 201h1v1h-1zM897 198h1v3h-1zM896 197h1v1h-1zM896 201h1v1h-1zM905 198h1v3h-1zM904 197h1v1h-1zM904 201h1v1h-1zM913 198h1v3h-1zM912 197h1v1h-1zM912 201h1v1h-1zM921 198h1v3h-1zM920 197h1v1h-1zM920 201h1v1h-1zM929 198h1v3h-1zM928 197h1v1h-1zM928 201h1v1h-1zM937 198h1v3h-1zM936 197h1v1h-1zM936 201h1v1h-1zM945 198h1v3h-1zM944 197h1v1h-1zM944 201h1v1h-1z" fill="#0c0c78"/>
<path d="M159 196h1v1h-1zM159 202h1v1h-1zM167 196h1v1h-1zM167 202h1v1h-1zM175 196h1v1h-1zM175 202h1v1h-1zM183 196h1v1h-1zM183 202h1v1h-1zM191 196h1v1h-1zM191 202h1v1h-1zM199 196h1v1h-1zM199 202h1v1h-1zM207 196h1v1h-1zM207 202h1v1h-1zM215 196h1v1h-1zM215 202h1v1h-1zM223 196h1v1h-1zM223 202h1v1h-1zM231 196h1v1h-1zM231 202h1v1h-1zM239 196h1v1h-1zM239 202h1v1h-1zM247 196h1v1h-1zM247 202h1v1h-1zM255 196h1v1h-1zM255 202h1v1h-1zM263 196h1v1h-1zM263 202h1v1h-1zM271 196h1v1h-1zM271 202h1v1h-1zM279 196h1v1h-1zM279 202h1v1h-1zM287 196h1v1h-1zM287 202h1v1h-1zM295 196h1v1h-1zM295 202h1v1h-1zM303 196h1v1h-1zM303 202h1v1h-1zM311 196h1v1h-1zM311 202h1v1h-1zM319 196h1v1h-1zM319 202h1v1h-1zM327 196h1v1h-1zM327 202h1v1h-1zM335 196h1v1h-1zM335 202h1v1h-1zM343 196h1v1h-1zM343 202h1v1h-1zM351 196h1v1h-1zM351 202h1v1h-1zM359 196h1v1h-1zM359 202h1v1h-1zM367 196h1v1h-1zM367 202h1v1h-1zM375 196h1v1h-1zM375 202h1v1h-1zM383 196h1v1h-1zM383 202h1v1h-1zM391 196h1v1h-1zM391 202h1v1h-1zM399 196h1v1h-1zM399 202h1v1h-1zM407 196h1v1h-1zM407 202h1v1h-1zM415 196h1v1h-1zM415 202h1v1h-1zM423 196h1v1h-1zM423 202h1v1h-1zM431 196h1v1h-1zM431 202h1v1h-1zM439 196h1v1h-1zM439 202h1v1h-1zM447 196h1v1h-1zM447 202h1v1h-1zM455 196h1v1h-1zM455 202h1v1h-1zM463 196h1v1h-1zM463 202h1v1h-1zM471 196h1v1h-1zM471 202h1v1h-1zM479 196h1v1h-1zM479 202h1v1h-1zM487 196h1v1h-1zM487 202h1v1h-1zM495 196h1v1h-1zM495 202h1v1h-1zM503 196h1v1h-1zM503 202h1v1h-1zM511 196h1v1h-1zM511 202h1v1h-1zM519 196h1v1h-1zM519 202h1v1h-1zM527 196h1v1h-1zM527 202h1v1h-1zM535 196h1v1h-1zM535 202h1v1h-1zM543 196h1v1h-1zM543 202h1v1h-1zM551 196h1v1h-1zM551 202h1v1h-1zM559 196h1v1h-1zM559 202h1v1h-1zM567 196h1v1h-1zM567 202h1v1h-1zM575 196h1v1h-1zM575 202h1v1h-1zM583 196h1v1h-1zM583 202h1v1h-1zM591 196h1v1h-1zM591 202h1v1h-1zM599 196h1v1h-1zM599 202h1v1h-1zM607 196h1v1h-1zM607 202h1v1h-1zM615 196h1v1h-1zM615 202h1v1h-1zM623 196h1v1h-1zM623 202h1v1h-1zM631 196h1v1h-1zM631 202h1v1h-1zM639 196h1v1h-1zM639 202h1v1h-1zM647 196h1v1h-1zM647 202h1v1h-1zM655 196h1v1h-1zM655 202h1v1h-1zM663 196h1v1h-1zM663 202h1v1h-1zM671 196h1v1h-1zM671 202h1v1h-1zM679 196h1v1h-1zM679 202h1v1h-1zM687 196h1v1h-1zM687 202h1v1h-1zM695 196h1v1h-1zM695 202h1v1h-1zM703 196h1v1h-1zM703 202h1v1h-1zM711 196h1v1h-1zM711 202h1v1h-1zM719 196h1v1h-1zM719 202h1v1h-1zM727 196h1v1h-1zM727 202h1v1h-1zM735 196h1v1h-1zM735 202h1v1h-1zM743 196h1v1h-1zM743 202h1v1h-1zM751 196h1v1h-1zM751 202h1v1h-1zM759 196h1v1h-1zM759 202h1v1h-1zM767 196h1v1h-1zM767 202h1v1h-1zM775 196h1v1h-1zM775 202h1v1h-1zM783 196h1v1h-1zM783 202h1v1h-1zM791 196h1v1h-1zM791 202h1v1h-1zM799 196h1v1h-1zM799 202h1v1h-1zM807 196h1v1h-1zM807 202h1v1h-1zM815 196h1v1h-1zM815 202h1v1h-1zM823 196h1v1h-1zM823 202h1v1h-1zM831 196h1v1h-1zM831 202h1v1h-1zM839 196h1v1h-1zM839 202h1v1h-1zM847 196h1v1h-1zM847 202h1v1h-1zM855 196h1v1h-1zM855 202h1v1h-1zM863 196h1v1h-1zM863 202h1v1h-1zM871 196h1v1h-1zM871 202h1v1h-1zM879 196h1v1h-1zM879 202h1v1h-1zM887 196h1v1h-1zM887 202h1v1h-1zM895 196h1v1h-1zM895 202h1v1h-1zM903 196h1v1h-1zM903 202h1v1h-1zM911 196h1v1h-1zM911 202h1v1h-1zM919 196h1v1h-1zM919 202h1v1h-1zM927 196h1v1h-1zM927 202h1v1h-1zM935 196h1v1h-1zM935 202h1v1h-1zM943 196h1v1h-1zM943 202h1v1h-1z" fill="#0c0c78" fill-opacity="0.5"/>
<text x="104.5" y="220" font-size="13" fill="#0c0c78" color="#0c0c78" text-anchor="start" textLength="47.08" lengthAdjust="spacing">CLDN16</text>
<rect x="157" y="215" width="792" height="1" fill="#0c0c78"/>
<path d="M161 214h1v3h-1zM160 213h1v1h-1zM160 217h1v1h-1zM169 214h1v3h-1zM168 213h1v1h-1zM168 217h1v1h-1zM177 214h1v3h-1zM176 213h1v1h-1zM176 217h1v1h-1zM185 214h1v3h-1zM184 213h1v1h-1zM184 217h1v1h-1zM193 214h1v3h-1zM192 213h1v1h-1zM192 217h1v1h-1zM201 214h1v3h-1zM200 213h1v1h-1zM200 217h1v1h-1zM209 214h1v3h-1zM208 213h1v1h-1zM208 217h1v1h-1zM217 214h1v3h-1zM216 213h1v1h-1zM216 217h1v1h-1zM225 214h1v3h-1zM224 213h1v1h-1zM224 217h1v1h-1zM233 214h1v3h-1zM232 213h1v1h-1zM232 217h1v1h-1zM241 214h1v3h-1zM240 213h1v1h-1zM240 217h1v1h-1zM249 214h1v3h-1zM248 213h1v1h-1zM248 217h1v1h-1zM257 214h1v3h-1zM256 213h1v1h-1zM256 217h1v1h-1zM265 214h1v3h-1zM264 213h1v1h-1zM264 217h1v1h-1zM273 214h1v3h-1zM272 213h1v1h-1zM272 217h1v1h-1zM281 214h1v3h-1zM280 213h1v1h-1zM280 217h1v1h-1zM289 214h1v3h-1zM288 213h1v1h-1zM288 217h1v1h-1zM297 214h1v3h-1zM296 213h1v1h-1zM296 217h1v1h-1zM305 214h1v3h-1zM304 213h1v1h-1zM304 217h1v1h-1zM313 214h1v3h-1zM312 213h1v1h-1zM312 217h1v1h-1zM321 214h1v3h-1zM320 213h1v1h-1zM320 217h1v1h-1zM329 214h1v3h-1zM328 213h1v1h-1zM328 217h1v1h-1zM337 214h1v3h-1zM336 213h1v1h-1zM336 217h1v1h-1zM345 214h1v3h-1zM344 213h1v1h-1zM344 217h1v1h-1zM353 214h1v3h-1zM352 213h1v1h-1zM352 217h1v1h-1zM361 214h1v3h-1zM360 213h1v1h-1zM360 217h1v1h-1zM369 214h1v3h-1zM368 213h1v1h-1zM368 217h1v1h-1zM377 214h1v3h-1zM376 213h1v1h-1zM376 217h1v1h-1zM385 214h1v3h-1zM384 213h1v1h-1zM384 217h1v1h-1zM393 214h1v3h-1zM392 213h1v1h-1zM392 217h1v1h-1zM401 214h1v3h-1zM400 213h1v1h-1zM400 217h1v1h-1zM409 214h1v3h-1zM408 213h1v1h-1zM408 217h1v1h-1zM417 214h1v3h-1zM416 213h1v1h-1zM416 217h1v1h-1zM425 214h1v3h-1zM424 213h1v1h-1zM424 217h1v1h-1zM433 214h1v3h-1zM432 213h1v1h-1zM432 217h1v1h-1zM441 214h1v3h-1zM440 213h1v1h-1zM440 217h1v1h-1zM449 214h1v3h-1zM448 213h1v1h-1zM448 217h1v1h-1zM457 214h1v3h-1zM456 213h1v1h-1zM456 217h1v1h-1zM465 214h1v3h-1zM464 213h1v1h-1zM464 217h1v1h-1zM473 214h1v3h-1zM472 213h1v1h-1zM472 217h1v1h-1zM481 214h1v3h-1zM480 213h1v1h-1zM480 217h1v1h-1zM489 214h1v3h-1zM488 213h1v1h-1zM488 217h1v1h-1zM497 214h1v3h-1zM496 213h1v1h-1zM496 217h1v1h-1zM505 214h1v3h-1zM504 213h1v1h-1zM504 217h1v1h-1zM513 214h1v3h-1zM512 213h1v1h-1zM512 217h1v1h-1zM521 214h1v3h-1zM520 213h1v1h-1zM520 217h1v1h-1zM529 214h1v3h-1zM528 213h1v1h-1zM528 217h1v1h-1zM537 214h1v3h-1zM536 213h1v1h-1zM536 217h1v1h-1zM545 214h1v3h-1zM544 213h1v1h-1zM544 217h1v1h-1zM553 214h1v3h-1zM552 213h1v1h-1zM552 217h1v1h-1zM561 214h1v3h-1zM560 213h1v1h-1zM560 217h1v1h-1zM569 214h1v3h-1zM568 213h1v1h-1zM568 217h1v1h-1zM577 214h1v3h-1zM576 213h1v1h-1zM576 217h1v1h-1zM585 214h1v3h-1zM584 213h1v1h-1zM584 217h1v1h-1zM593 214h1v3h-1zM592 213h1v1h-1zM592 217h1v1h-1zM601 214h1v3h-1zM600 213h1v1h-1zM600 217h1v1h-1zM609 214h1v3h-1zM608 213h1v1h-1zM608 217h1v1h-1zM617 214h1v3h-1zM616 213h1v1h-1zM616 217h1v1h-1zM625 214h1v3h-1zM624 213h1v1h-1zM624 217h1v1h-1zM633 214h1v3h-1zM632 213h1v1h-1zM632 217h1v1h-1zM641 214h1v3h-1zM640 213h1v1h-1zM640 217h1v1h-1zM649 214h1v3h-1zM648 213h1v1h-1zM648 217h1v1h-1zM657 214h1v3h-1zM656 213h1v1h-1zM656 217h1v1h-1zM665 214h1v3h-1zM664 213h1v1h-1zM664 217h1v1h-1zM673 214h1v3h-1zM672 213h1v1h-1zM672 217h1v1h-1zM681 214h1v3h-1zM680 213h1v1h-1zM680 217h1v1h-1zM689 214h1v3h-1zM688 213h1v1h-1zM688 217h1v1h-1zM697 214h1v3h-1zM696 213h1v1h-1zM696 217h1v1h-1zM705 214h1v3h-1zM704 213h1v1h-1zM704 217h1v1h-1zM713 214h1v3h-1zM712 213h1v1h-1zM712 217h1v1h-1zM721 214h1v3h-1zM720 213h1v1h-1zM720 217h1v1h-1zM729 214h1v3h-1zM728 213h1v1h-1zM728 217h1v1h-1zM737 214h1v3h-1zM736 213h1v1h-1zM736 217h1v1h-1zM745 214h1v3h-1zM744 213h1v1h-1zM744 217h1v1h-1zM753 214h1v3h-1zM752 213h1v1h-1zM752 217h1v1h-1zM761 214h1v3h-1zM760 213h1v1h-1zM760 217h1v1h-1zM769 214h1v3h-1zM768 213h1v1h-1zM768 217h1v1h-1zM777 214h1v3h-1zM776 213h1v1h-1zM776 217h1v1h-1zM785 214h1v3h-1zM784 213h1v1h-1zM784 217h1v1h-1zM793 214h1v3h-1zM792 213h1v1h-1zM792 217h1v1h-1zM801 214h1v3h-1zM800 213h1v1h-1zM800 217h1v1h-1zM809 214h1v3h-1zM808 213h1v1h-1zM808 217h1v1h-1zM817 214h1v3h-1zM816 213h1v1h-1zM816 217h1v1h-1zM825 214h1v3h-1zM824 213h1v1h-1zM824 217h1v1h-1zM833 214h1v3h-1zM832 213h1v1h-1zM832 217h1v1h-1zM841 214h1v3h-1zM840 213h1v1h-1zM840 217h1v1h-1zM849 214h1v3h-1zM848 213h1v1h-1zM848 217h1v1h-1zM857 214h1v3h-1zM856 213h1v1h-1zM856 217h1v1h-1zM865 214h1v3h-1zM864 213h1v1h-1zM864 217h1v1h-1zM873 214h1v3h-1zM872 213h1v1h-1zM872 217h1v1h-1zM881 214h1v3h-1zM880 213h1v1h-1zM880 217h1v1h-1zM889 214h1v3h-1zM888 213h1v1h-1zM888 217h1v1h-1zM897 214h1v3h-1zM896 213h1v1h-1zM896 217h1v1h-1zM905 214h1v3h-1zM904 213h1v1h-1zM904 217h1v1h-1zM913 214h1v3h-1zM912 213h1v1h-1zM912 217h1v1h-1zM921 214h1v3h-1zM920 213h1v1h-1zM920 217h1v1h-1zM929 214h1v3h-1zM928 213h1v1h-1zM928 217h1v1h-1zM937 214h1v3h-1zM936 213h1v1h-1zM936 217h1v1h-1zM945 214h1v3h-1zM944 213h1v1h-1zM944 217h1v1h-1z" fill="#0c0c78"/>
<path d="M159 212h1v1h-1zM159 218h1v1h-1zM167 212h1v1h-1zM167 218h1v1h-1zM175 212h1v1h-1zM175 218h1v1h-1zM183 212h1v1h-1zM183 218h1v1h-1zM191 212h1v1h-1zM191 218h1v1h-1zM199 212h1v1h-1zM199 218h1v1h-1zM207 212h1v1h-1zM207 218h1v1h-1zM215 212h1v1h-1zM215 218h1v1h-1zM223 212h1v1h-1zM223 218h1v1h-1zM231 212h1v1h-1zM231 218h1v1h-1zM239 212h1v1h-1zM239 218h1v1h-1zM247 212h1v1h-1zM247 218h1v1h-1zM255 212h1v1h-1zM255 218h1v1h-1zM263 212h1v1h-1zM263 218h1v1h-1zM271 212h1v1h-1zM271 218h1v1h-1zM279 212h1v1h-1zM279 218h1v1h-1zM287 212h1v1h-1zM287 218h1v1h-1zM295 212h1v1h-1zM295 218h1v1h-1zM303 212h1v1h-1zM303 218h1v1h-1zM311 212h1v1h-1zM311 218h1v1h-1zM319 212h1v1h-1zM319 218h1v1h-1zM327 212h1v1h-1zM327 218h1v1h-1zM335 212h1v1h-1zM335 218h1v1h-1zM343 212h1v1h-1zM343 218h1v1h-1zM351 212h1v1h-1zM351 218h1v1h-1zM359 212h1v1h-1zM359 218h1v1h-1zM367 212h1v1h-1zM367 218h1v1h-1zM375 212h1v1h-1zM375 218h1v1h-1zM383 212h1v1h-1zM383 218h1v1h-1zM391 212h1v1h-1zM391 218h1v1h-1zM399 212h1v1h-1zM399 218h1v1h-1zM407 212h1v1h-1zM407 218h1v1h-1zM415 212h1v1h-1zM415 218h1v1h-1zM423 212h1v1h-1zM423 218h1v1h-1zM431 212h1v1h-1zM431 218h1v1h-1zM439 212h1v1h-1zM439 218h1v1h-1zM447 212h1v1h-1zM447 218h1v1h-1zM455 212h1v1h-1zM455 218h1v1h-1zM463 212h1v1h-1zM463 218h1v1h-1zM471 212h1v1h-1zM471 218h1v1h-1zM479 212h1v1h-1zM479 218h1v1h-1zM487 212h1v1h-1zM487 218h1v1h-1zM495 212h1v1h-1zM495 218h1v1h-1zM503 212h1v1h-1zM503 218h1v1h-1zM511 212h1v1h-1zM511 218h1v1h-1zM519 212h1v1h-1zM519 218h1v1h-1zM527 212h1v1h-1zM527 218h1v1h-1zM535 212h1v1h-1zM535 218h1v1h-1zM543 212h1v1h-1zM543 218h1v1h-1zM551 212h1v1h-1zM551 218h1v1h-1zM559 212h1v1h-1zM559 218h1v1h-1zM567 212h1v1h-1zM567 218h1v1h-1zM575 212h1v1h-1zM575 218h1v1h-1zM583 212h1v1h-1zM583 218h1v1h-1zM591 212h1v1h-1zM591 218h1v1h-1zM599 212h1v1h-1zM599 218h1v1h-1zM607 212h1v1h-1zM607 218h1v1h-1zM615 212h1v1h-1zM615 218h1v1h-1zM623 212h1v1h-1zM623 218h1v1h-1zM631 212h1v1h-1zM631 218h1v1h-1zM639 212h1v1h-1zM639 218h1v1h-1zM647 212h1v1h-1zM647 218h1v1h-1zM655 212h1v1h-1zM655 218h1v1h-1zM663 212h1v1h-1zM663 218h1v1h-1zM671 212h1v1h-1zM671 218h1v1h-1zM679 212h1v1h-1zM679 218h1v1h-1zM687 212h1v1h-1zM687 218h1v1h-1zM695 212h1v1h-1zM695 218h1v1h-1zM703 212h1v1h-1zM703 218h1v1h-1zM711 212h1v1h-1zM711 218h1v1h-1zM719 212h1v1h-1zM719 218h1v1h-1zM727 212h1v1h-1zM727 218h1v1h-1zM735 212h1v1h-1zM735 218h1v1h-1zM743 212h1v1h-1zM743 218h1v1h-1zM751 212h1v1h-1zM751 218h1v1h-1zM759 212h1v1h-1zM759 218h1v1h-1zM767 212h1v1h-1zM767 218h1v1h-1zM775 212h1v1h-1zM775 218h1v1h-1zM783 212h1v1h-1zM783 218h1v1h-1zM791 212h1v1h-1zM791 218h1v1h-1zM799 212h1v1h-1zM799 218h1v1h-1zM807 212h1v1h-1zM807 218h1v1h-1zM815 212h1v1h-1zM815 218h1v1h-1zM823 212h1v1h-1zM823 218h1v1h-1zM831 212h1v1h-1zM831 218h1v1h-1zM839 212h1v1h-1zM839 218h1v1h-1zM847 212h1v1h-1zM847 218h1v1h-1zM855 212h1v1h-1zM855 218h1v1h-1zM863 212h1v1h-1zM863 218h1v1h-1zM871 212h1v1h-1zM871 218h1v1h-1zM879 212h1v1h-1zM879 218h1v1h-1zM887 212h1v1h-1zM887 218h1v1h-1zM895 212h1v1h-1zM895 218h1v1h-1zM903 212h1v1h-1zM903 218h1v1h-1zM911 212h1v1h-1zM911 218h1v1h-1zM919 212h1v1h-1zM919 218h1v1h-1zM927 212h1v1h-1zM927 218h1v1h-1zM935 212h1v1h-1zM935 218h1v1h-1zM943 212h1v1h-1zM943 218h1v1h-1z" fill="#0c0c78" fill-opacity="0.5"/>
<text x="491.8" y="236" font-size="11" fill="#000" color="#000" text-anchor="start" textLength="121.59" lengthAdjust="spacing">RefSeq genes from NCBI</text>
<text x="61.2" y="251" font-size="13" fill="#0c0c78" color="#0c0c78" text-anchor="start" textLength="90.38" lengthAdjust="spacing">RefSeq Curated</text>
<rect x="157" y="246" width="792" height="1" fill="#0c0c78"/>
<text x="445.8" y="267" font-size="11" fill="#000" color="#000" text-anchor="start" textLength="213.24" lengthAdjust="spacing">Publications: Sequences in Scientific Articles</text>
<text x="152" y="281.5" font-size="13" fill="#000" color="#000" text-anchor="end">Sequences</text>
<text x="152" y="297.5" font-size="13" fill="#000" color="#000" text-anchor="end">SNPs</text>
<text x="368.4" y="315" font-size="13" fill="#005000" color="#005000" text-anchor="start" textLength="368.42" lengthAdjust="spacing">OMIM Gene Phenotypes - Dark Green Can Be Disease-causing</text>
<text x="151" y="329" font-size="13" fill="#005000" color="#005000" text-anchor="end">OMIM Genes</text>
<rect x="156" y="317" width="793" height="15" fill="#005000"/>
<text x="436.6" y="345" font-size="11" fill="#000" color="#000" text-anchor="start" textLength="231.44" lengthAdjust="spacing">Short Genetic Variants from dbSNP release 155</text>
<text x="26.7" y="358.5" font-size="13" fill="#000" color="#000" text-anchor="start" textLength="125.12" lengthAdjust="spacing">Common dbSNP(155)</text>
<rect x="354" y="348" width="66" height="15" fill="#000"/>
<text x="266.4" y="377" font-size="13" fill="#000" color="#000" text-anchor="start" textLength="570.91" lengthAdjust="spacing">Gene Expression in 54 tissues from GTEx RNA-seq of 17382 samples, 948 donors (V8, Aug 2019)</text>
<text x="152" y="404" font-size="13" fill="#000" color="#000" text-anchor="end">CLDN16</text>
<rect x="156.5" y="380.5" width="377" height="34" fill="#ffffff" stroke="#ececec" stroke-width="1"/>
<rect x="163" y="412" width="5" height="2" fill="#ee9a00"/>
<rect x="170" y="407" width="5" height="7" fill="#8fbc8f"/>
<rect x="205" y="411" width="5" height="3" fill="#eeee00"/>
<rect x="212" y="411" width="5" height="3" fill="#eeee00"/>
<rect x="219" y="412" width="5" height="2" fill="#eeee00"/>
<rect x="240" y="411" width="5" height="3" fill="#eeee00"/>
<rect x="247" y="410" width="5" height="4" fill="#eeee00"/>
<rect x="254" y="412" width="5" height="2" fill="#eeee00"/>
<rect x="261" y="411" width="5" height="3" fill="#eeee00"/>
<rect x="268" y="411" width="5" height="3" fill="#eeee00"/>
<rect x="275" y="413" width="5" height="1" fill="#eeee00"/>
<rect x="282" y="413" width="5" height="1" fill="#eeee00"/>
<rect x="289" y="412" width="5" height="2" fill="#eeee00"/>
<rect x="352" y="412" width="5" height="2" fill="#8b7355"/>
<rect x="366" y="406" width="5" height="8" fill="#eed5d2"/>
<rect x="387" y="393" width="5" height="21" fill="#cdb79e"/>
<rect x="394" y="380" width="5" height="34" fill="#cdb79e"/>
<rect x="401" y="410" width="5" height="4" fill="#cdb79e"/>
<rect x="408" y="413" width="5" height="1" fill="#9acd32"/>
<rect x="415" y="408" width="5" height="6" fill="#cdb79e"/>
<rect x="429" y="410" width="5" height="4" fill="#ffd700"/>
<rect x="436" y="413" width="5" height="1" fill="#ffb6c1"/>
<rect x="443" y="413" width="5" height="1" fill="#cd9b1d"/>
<rect x="457" y="412" width="5" height="2" fill="#d9d9d9"/>
<rect x="464" y="400" width="5" height="14" fill="#3a5fcd"/>
<rect x="471" y="402" width="5" height="12" fill="#1e90ff"/>
<rect x="499" y="410" width="5" height="4" fill="#a6a6a6"/>
<rect x="506" y="410" width="5" height="4" fill="#008b45"/>
<rect x="513" y="410" width="5" height="4" fill="#eed5d2"/>
<rect x="520" y="410" width="5" height="4" fill="#eed5d2"/>
<rect x="156" y="415" width="793" height="2" fill="#000080"/>
<text x="281.6" y="432" font-size="13" fill="#000" color="#000" text-anchor="start" textLength="540.05" lengthAdjust="spacing">H3K27Ac Mark (Often Found Near Active Regulatory Elements) on 7 cell lines from ENCODE</text>
<text x="13" y="446" font-size="13" fill="#000" color="#000" text-anchor="start">Layered H3K27Ac</text>
<rect x="156" y="463" width="793" height="1" fill="#66203f"/>
<text x="406.5" y="478" font-size="13" fill="#3a3a8c" color="#3a3a8c" text-anchor="start" textLength="290.05" lengthAdjust="spacing">100 vertebrates Basewise Conservation by PhyloP</text>
<text x="152" y="476.5" font-size="13" fill="#3a3a8c" color="#3a3a8c" text-anchor="end">4.88 _</text>
<text x="13" y="502" font-size="13" fill="#3a3a8c" color="#3a3a8c" text-anchor="start">100 Vert. Cons</text>
<text x="152" y="527" font-size="13" fill="#8b3a3a" color="#8b3a3a" text-anchor="end">-4.5 _</text>
<rect x="168" y="504" width="40" height="2" fill="#e4e0b0"/>
<rect x="169" y="504" width="6" height="2" fill="#bcb24a"/>
<rect x="199" y="504" width="6" height="2" fill="#c9c06a"/>
<rect x="301" y="504" width="40" height="2" fill="#e4e0b0"/>
<rect x="302" y="504" width="6" height="2" fill="#bcb24a"/>
<rect x="332" y="504" width="6" height="2" fill="#c9c06a"/>
<rect x="232" y="504" width="39" height="1" fill="#c8f5c8"/>
<rect x="248" y="504" width="6" height="2" fill="#00e600"/>
<rect x="364" y="506" width="38" height="1" fill="#c8f5c8"/>
<rect x="380" y="506" width="6" height="2" fill="#00e600"/>
<rect x="827" y="504" width="37" height="1" fill="#c8f5c8"/>
<rect x="842" y="504" width="6" height="2" fill="#00e600"/>
<rect x="892" y="504" width="38" height="1" fill="#c8f5c8"/>
<rect x="908" y="504" width="6" height="2" fill="#00e600"/>
<rect x="431" y="505" width="9" height="1" fill="#ff5050"/>
<rect x="440" y="504" width="21" height="1" fill="#ff5050"/>
<rect x="461" y="505" width="10" height="1" fill="#ff5050"/>
<rect x="629" y="505" width="9" height="1" fill="#ff5050"/>
<rect x="638" y="504" width="21" height="1" fill="#ff5050"/>
<rect x="659" y="505" width="10" height="1" fill="#ff5050"/>
<rect x="695" y="505" width="9" height="1" fill="#ff5050"/>
<rect x="704" y="504" width="21" height="1" fill="#ff5050"/>
<rect x="725" y="505" width="10" height="1" fill="#ff5050"/>
<rect x="498" y="504" width="44" height="2" fill="#c4c4ff"/>
<rect x="498" y="504" width="4" height="2" fill="#9090ff"/>
<rect x="502" y="504" width="4" height="2" fill="#3a3aff"/>
<rect x="506" y="504" width="5" height="2" fill="#9a9aff"/>
<rect x="530" y="504" width="6" height="2" fill="#9a9aff"/>
<rect x="536" y="505" width="6" height="1" fill="#1010ff"/>
<rect x="536" y="504" width="6" height="1" fill="#7a7aff"/>
<rect x="565" y="506" width="43" height="2" fill="#c4c4ff"/>
<rect x="565" y="506" width="4" height="2" fill="#9090ff"/>
<rect x="569" y="506" width="4" height="2" fill="#3a3aff"/>
<rect x="573" y="506" width="5" height="2" fill="#9a9aff"/>
<rect x="596" y="506" width="6" height="2" fill="#9a9aff"/>
<rect x="602" y="507" width="6" height="1" fill="#1010ff"/>
<rect x="602" y="506" width="6" height="1" fill="#7a7aff"/>
<rect x="763" y="504" width="43" height="2" fill="#c4c4ff"/>
<rect x="763" y="504" width="4" height="2" fill="#9090ff"/>
<rect x="767" y="504" width="4" height="2" fill="#3a3aff"/>
<rect x="771" y="504" width="5" height="2" fill="#9a9aff"/>
<rect x="794" y="504" width="6" height="2" fill="#9a9aff"/>
<rect x="800" y="505" width="6" height="1" fill="#1010ff"/>
<rect x="800" y="504" width="6" height="1" fill="#7a7aff"/>
<text x="445.3" y="544" font-size="13" fill="#0c0c78" color="#0c0c78" text-anchor="start" textLength="213.71" lengthAdjust="spacing">Multiz Alignments of 100 Vertebrates</text>
<text x="152" y="558" font-size="13" fill="#e08000" color="#e08000" text-anchor="end">Gaps</text>
<text x="152" y="573" font-size="13" fill="#0c0c78" color="#0c0c78" text-anchor="end">Human</text>
<text x="152" y="588" font-size="13" fill="#0c0c78" color="#0c0c78" text-anchor="end">Rhesus</text>
<text x="152" y="603" font-size="13" fill="#0e620e" color="#0e620e" text-anchor="end">Mouse</text>
<text x="152" y="618" font-size="13" fill="#0c0c78" color="#0c0c78" text-anchor="end">Dog</text>
<text x="152" y="633" font-size="13" fill="#0e620e" color="#0e620e" text-anchor="end">Elephant</text>
<text x="152" y="648" font-size="13" fill="#0e620e" color="#0e620e" text-anchor="end">Chicken</text>
<text x="152" y="663" font-size="13" fill="#0c0c78" color="#0c0c78" text-anchor="end">X_tropicalis</text>
<text x="152" y="678" font-size="13" fill="#0e620e" color="#0e620e" text-anchor="end">Zebrafish</text>
<text x="187.5" y="573" font-size="13" fill="#0c0c78" color="#0c0c78" text-anchor="middle">C</text>
<text x="187.5" y="588" font-size="13" fill="#0c0c78" color="#0c0c78" text-anchor="middle">C</text>
<rect x="184" y="598" width="6" height="1" fill="#6e6ea6"/>
<rect x="184" y="601" width="6" height="1" fill="#6e6ea6"/>
<rect x="184" y="628" width="6" height="1" fill="#6e6ea6"/>
<rect x="184" y="631" width="6" height="1" fill="#6e6ea6"/>
<rect x="184" y="643" width="6" height="1" fill="#6e6ea6"/>
<rect x="184" y="646" width="6" height="1" fill="#6e6ea6"/>
<rect x="184" y="658" width="6" height="1" fill="#6e6ea6"/>
<rect x="184" y="661" width="6" height="1" fill="#6e6ea6"/>
<rect x="186" y="614" width="3" height="1" fill="#8a8ab8"/>
<text x="253.5" y="573" font-size="13" fill="#0c0c78" color="#0c0c78" text-anchor="middle">T</text>
<text x="253.5" y="588" font-size="13" fill="#0c0c78" color="#0c0c78" text-anchor="middle">T</text>
<rect x="250" y="598" width="6" height="1" fill="#6e6ea6"/>
<rect x="250" y="601" width="6" height="1" fill="#6e6ea6"/>
<rect x="250" y="628" width="6" height="1" fill="#6e6ea6"/>
<rect x="250" y="631" width="6" height="1" fill="#6e6ea6"/>
<rect x="250" y="643" width="6" height="1" fill="#6e6ea6"/>
<rect x="250" y="646" width="6" height="1" fill="#6e6ea6"/>
<rect x="250" y="658" width="6" height="1" fill="#6e6ea6"/>
<rect x="250" y="661" width="6" height="1" fill="#6e6ea6"/>
<rect x="252" y="614" width="3" height="1" fill="#8a8ab8"/>
<text x="319.5" y="573" font-size="13" fill="#0c0c78" color="#0c0c78" text-anchor="middle">C</text>
<text x="319.5" y="588" font-size="13" fill="#0c0c78" color="#0c0c78" text-anchor="middle">C</text>
<rect x="316" y="598" width="6" height="1" fill="#6e6ea6"/>
<rect x="316" y="601" width="6" height="1" fill="#6e6ea6"/>
<rect x="316" y="628" width="6" height="1" fill="#6e6ea6"/>
<rect x="316" y="631" width="6" height="1" fill="#6e6ea6"/>
<rect x="316" y="643" width="6" height="1" fill="#6e6ea6"/>
<rect x="316" y="646" width="6" height="1" fill="#6e6ea6"/>
<rect x="316" y="658" width="6" height="1" fill="#6e6ea6"/>
<rect x="316" y="661" width="6" height="1" fill="#6e6ea6"/>
<rect x="318" y="614" width="3" height="1" fill="#8a8ab8"/>
<text x="385.5" y="573" font-size="13" fill="#0c0c78" color="#0c0c78" text-anchor="middle">C</text>
<text x="385.5" y="588" font-size="13" fill="#8888b0" color="#8888b0" text-anchor="middle">T</text>
<rect x="382" y="598" width="6" height="1" fill="#6e6ea6"/>
<rect x="382" y="601" width="6" height="1" fill="#6e6ea6"/>
<rect x="382" y="628" width="6" height="1" fill="#6e6ea6"/>
<rect x="382" y="631" width="6" height="1" fill="#6e6ea6"/>
<rect x="382" y="643" width="6" height="1" fill="#6e6ea6"/>
<rect x="382" y="646" width="6" height="1" fill="#6e6ea6"/>
<rect x="382" y="658" width="6" height="1" fill="#6e6ea6"/>
<rect x="382" y="661" width="6" height="1" fill="#6e6ea6"/>
<rect x="384" y="614" width="3" height="1" fill="#8a8ab8"/>
<text x="451.5" y="573" font-size="13" fill="#0c0c78" color="#0c0c78" text-anchor="middle">A</text>
<text x="451.5" y="588" font-size="13" fill="#0c0c78" color="#0c0c78" text-anchor="middle">A</text>
<rect x="448" y="598" width="6" height="1" fill="#6e6ea6"/>
<rect x="448" y="601" width="6" height="1" fill="#6e6ea6"/>
<rect x="448" y="628" width="6" height="1" fill="#6e6ea6"/>
<rect x="448" y="631" width="6" height="1" fill="#6e6ea6"/>
<rect x="448" y="643" width="6" height="1" fill="#6e6ea6"/>
<rect x="448" y="646" width="6" height="1" fill="#6e6ea6"/>
<rect x="448" y="658" width="6" height="1" fill="#6e6ea6"/>
<rect x="448" y="661" width="6" height="1" fill="#6e6ea6"/>
<rect x="450" y="614" width="3" height="1" fill="#8a8ab8"/>
<text x="517.5" y="573" font-size="13" fill="#0c0c78" color="#0c0c78" text-anchor="middle">G</text>
<text x="517.5" y="588" font-size="13" fill="#0c0c78" color="#0c0c78" text-anchor="middle">G</text>
<rect x="514" y="598" width="6" height="1" fill="#6e6ea6"/>
<rect x="514" y="601" width="6" height="1" fill="#6e6ea6"/>
<rect x="514" y="628" width="6" height="1" fill="#6e6ea6"/>
<rect x="514" y="631" width="6" height="1" fill="#6e6ea6"/>
<rect x="514" y="643" width="6" height="1" fill="#6e6ea6"/>
<rect x="514" y="646" width="6" height="1" fill="#6e6ea6"/>
<rect x="514" y="658" width="6" height="1" fill="#6e6ea6"/>
<rect x="514" y="661" width="6" height="1" fill="#6e6ea6"/>
<rect x="516" y="614" width="3" height="1" fill="#8a8ab8"/>
<text x="583.5" y="573" font-size="13" fill="#0c0c78" color="#0c0c78" text-anchor="middle">G</text>
<text x="583.5" y="588" font-size="13" fill="#8888b0" color="#8888b0" text-anchor="middle">A</text>
<rect x="580" y="598" width="6" height="1" fill="#6e6ea6"/>
<rect x="580" y="601" width="6" height="1" fill="#6e6ea6"/>
<rect x="580" y="628" width="6" height="1" fill="#6e6ea6"/>
<rect x="580" y="631" width="6" height="1" fill="#6e6ea6"/>
<rect x="580" y="643" width="6" height="1" fill="#6e6ea6"/>
<rect x="580" y="646" width="6" height="1" fill="#6e6ea6"/>
<rect x="580" y="658" width="6" height="1" fill="#6e6ea6"/>
<rect x="580" y="661" width="6" height="1" fill="#6e6ea6"/>
<rect x="582" y="614" width="3" height="1" fill="#8a8ab8"/>
<text x="649.5" y="573" font-size="13" fill="#0c0c78" color="#0c0c78" text-anchor="middle">A</text>
<text x="649.5" y="588" font-size="13" fill="#0c0c78" color="#0c0c78" text-anchor="middle">A</text>
<rect x="646" y="598" width="6" height="1" fill="#6e6ea6"/>
<rect x="646" y="601" width="6" height="1" fill="#6e6ea6"/>
<rect x="646" y="628" width="6" height="1" fill="#6e6ea6"/>
<rect x="646" y="631" width="6" height="1" fill="#6e6ea6"/>
<rect x="646" y="643" width="6" height="1" fill="#6e6ea6"/>
<rect x="646" y="646" width="6" height="1" fill="#6e6ea6"/>
<rect x="646" y="658" width="6" height="1" fill="#6e6ea6"/>
<rect x="646" y="661" width="6" height="1" fill="#6e6ea6"/>
<rect x="648" y="614" width="3" height="1" fill="#8a8ab8"/>
<text x="715.5" y="573" font-size="13" fill="#0c0c78" color="#0c0c78" text-anchor="middle">A</text>
<text x="715.5" y="588" font-size="13" fill="#0c0c78" color="#0c0c78" text-anchor="middle">A</text>
<rect x="712" y="598" width="6" height="1" fill="#6e6ea6"/>
<rect x="712" y="601" width="6" height="1" fill="#6e6ea6"/>
<rect x="712" y="628" width="6" height="1" fill="#6e6ea6"/>
<rect x="712" y="631" width="6" height="1" fill="#6e6ea6"/>
<rect x="712" y="643" width="6" height="1" fill="#6e6ea6"/>
<rect x="712" y="646" width="6" height="1" fill="#6e6ea6"/>
<rect x="712" y="658" width="6" height="1" fill="#6e6ea6"/>
<rect x="712" y="661" width="6" height="1" fill="#6e6ea6"/>
<rect x="714" y="614" width="3" height="1" fill="#8a8ab8"/>
<text x="781.5" y="573" font-size="13" fill="#0c0c78" color="#0c0c78" text-anchor="middle">G</text>
<text x="781.5" y="588" font-size="13" fill="#0c0c78" color="#0c0c78" text-anchor="middle">G</text>
<rect x="778" y="598" width="6" height="1" fill="#6e6ea6"/>
<rect x="778" y="601" width="6" height="1" fill="#6e6ea6"/>
<rect x="778" y="628" width="6" height="1" fill="#6e6ea6"/>
<rect x="778" y="631" width="6" height="1" fill="#6e6ea6"/>
<rect x="778" y="643" width="6" height="1" fill="#6e6ea6"/>
<rect x="778" y="646" width="6" height="1" fill="#6e6ea6"/>
<rect x="778" y="658" width="6" height="1" fill="#6e6ea6"/>
<rect x="778" y="661" width="6" height="1" fill="#6e6ea6"/>
<rect x="780" y="614" width="3" height="1" fill="#8a8ab8"/>
<text x="847.5" y="573" font-size="13" fill="#0c0c78" color="#0c0c78" text-anchor="middle">T</text>
<text x="847.5" y="588" font-size="13" fill="#0c0c78" color="#0c0c78" text-anchor="middle">T</text>
<rect x="845" y="598" width="6" height="1" fill="#6e6ea6"/>
<rect x="845" y="601" width="6" height="1" fill="#6e6ea6"/>
<rect x="845" y="628" width="6" height="1" fill="#6e6ea6"/>
<rect x="845" y="631" width="6" height="1" fill="#6e6ea6"/>
<rect x="845" y="643" width="6" height="1" fill="#6e6ea6"/>
<rect x="845" y="646" width="6" height="1" fill="#6e6ea6"/>
<rect x="845" y="658" width="6" height="1" fill="#6e6ea6"/>
<rect x="845" y="661" width="6" height="1" fill="#6e6ea6"/>
<rect x="847" y="614" width="3" height="1" fill="#8a8ab8"/>
<text x="913.5" y="573" font-size="13" fill="#0c0c78" color="#0c0c78" text-anchor="middle">T</text>
<text x="913.5" y="588" font-size="13" fill="#0c0c78" color="#0c0c78" text-anchor="middle">T</text>
<rect x="911" y="598" width="6" height="1" fill="#6e6ea6"/>
<rect x="911" y="601" width="6" height="1" fill="#6e6ea6"/>
<rect x="911" y="628" width="6" height="1" fill="#6e6ea6"/>
<rect x="911" y="631" width="6" height="1" fill="#6e6ea6"/>
<rect x="911" y="643" width="6" height="1" fill="#6e6ea6"/>
<rect x="911" y="646" width="6" height="1" fill="#6e6ea6"/>
<rect x="911" y="658" width="6" height="1" fill="#6e6ea6"/>
<rect x="911" y="661" width="6" height="1" fill="#6e6ea6"/>
<rect x="913" y="614" width="3" height="1" fill="#8a8ab8"/>
<text x="441.8" y="694" font-size="13" fill="#000" color="#000" text-anchor="start" textLength="221.85" lengthAdjust="spacing">Repeating Elements by RepeatMasker</text>
<text x="68.9" y="708" font-size="13" fill="#000" color="#000" text-anchor="start" textLength="82.74" lengthAdjust="spacing">RepeatMasker</text>
<rect x="156" y="696" width="793" height="15" fill="#000"/>
</svg></body></html>
